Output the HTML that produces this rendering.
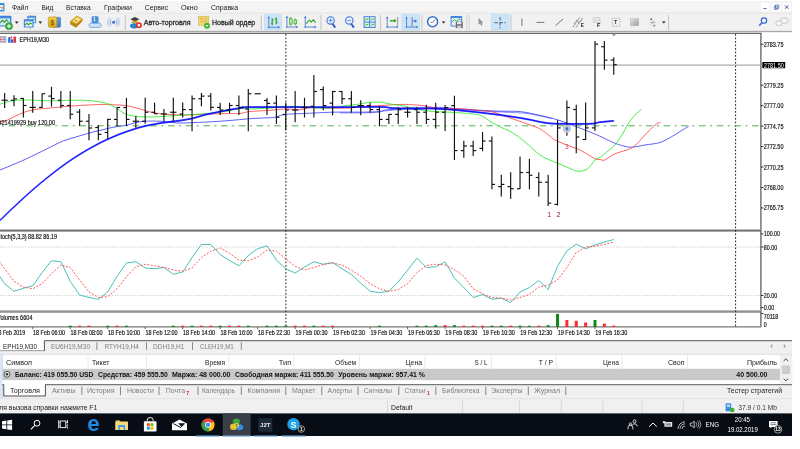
<!DOCTYPE html>
<html lang="ru"><head><meta charset="utf-8"><title>MetaTrader 5 - EPH19,M30</title>
<style>
html,body{margin:0;padding:0;background:#fff;overflow:hidden}
body{width:800px;height:449px;position:relative}
svg{position:absolute;left:0;top:0;display:block;font-family:"Liberation Sans", sans-serif;will-change:transform;filter:blur(0.35px);}
text{white-space:pre}
</style></head><body>
<svg width="800" height="449" viewBox="0 0 800 449">
<rect x="0.00" y="1.30" width="792.00" height="435.00" fill="#f0f0f0" />
<rect x="0.00" y="1.30" width="792.00" height="12.00" fill="#f4f4f4" />
<line x1="0.00" y1="13.30" x2="792.00" y2="13.30" stroke="#dadada" stroke-width="0.7" />
<rect x="-2.00" y="3.00" width="6.50" height="8.50" fill="#3b8ede" rx="1"/>
<rect x="-2.00" y="5.20" width="5.20" height="4.60" fill="#ffffff" />
<polyline points="-1.00,8.00 1.00,7.00 2.00,8.60 3.20,6.80" fill="none" stroke="#e05a2a" stroke-width="0.8" stroke-linejoin="round" />
<text x="12.00" y="9.93" font-size="7.3" fill="#1a1a1a" font-weight="normal" textLength="16.50" lengthAdjust="spacingAndGlyphs" >Файл</text>
<text x="41.50" y="9.93" font-size="7.3" fill="#1a1a1a" font-weight="normal" textLength="11.80" lengthAdjust="spacingAndGlyphs" >Вид</text>
<text x="66.00" y="9.93" font-size="7.3" fill="#1a1a1a" font-weight="normal" textLength="24.60" lengthAdjust="spacingAndGlyphs" >Вставка</text>
<text x="104.00" y="9.93" font-size="7.3" fill="#1a1a1a" font-weight="normal" textLength="27.90" lengthAdjust="spacingAndGlyphs" >Графики</text>
<text x="144.75" y="9.93" font-size="7.3" fill="#1a1a1a" font-weight="normal" textLength="23.35" lengthAdjust="spacingAndGlyphs" >Сервис</text>
<text x="181.00" y="9.93" font-size="7.3" fill="#1a1a1a" font-weight="normal" textLength="16.75" lengthAdjust="spacingAndGlyphs" >Окно</text>
<text x="211.00" y="9.93" font-size="7.3" fill="#1a1a1a" font-weight="normal" textLength="27.10" lengthAdjust="spacingAndGlyphs" >Справка</text>
<rect x="761.00" y="3.00" width="8.40" height="8.00" fill="#ffffff" />
<rect x="771.70" y="3.00" width="8.40" height="8.00" fill="#ffffff" />
<rect x="782.40" y="3.00" width="8.40" height="8.00" fill="#ffffff" />
<line x1="763.30" y1="8.60" x2="766.60" y2="8.60" stroke="#3c5a9c" stroke-width="0.9" />
<rect x="774.30" y="6.30" width="3.20" height="3.20" fill="none" stroke="#4c68a8" stroke-width="0.7"/>
<rect x="775.60" y="5.00" width="3.20" height="3.20" fill="none" stroke="#4c68a8" stroke-width="0.7"/>
<line x1="785.00" y1="5.40" x2="788.40" y2="8.80" stroke="#3c5a9c" stroke-width="1.0" />
<line x1="788.40" y1="5.40" x2="785.00" y2="8.80" stroke="#3c5a9c" stroke-width="1.0" />
<rect x="0.00" y="13.60" width="792.00" height="17.60" fill="#f1f1f1" />
<line x1="0.00" y1="31.40" x2="792.00" y2="31.40" stroke="#8e8e8e" stroke-width="0.95" />
<rect x="0.00" y="31.85" width="792.00" height="1.00" fill="#ececec" />
<line x1="30.20" y1="15.00" x2="30.20" y2="30.00" stroke="#b9b9b9" stroke-width="0.8" />
<line x1="125.30" y1="15.00" x2="125.30" y2="30.00" stroke="#b9b9b9" stroke-width="0.8" />
<line x1="261.30" y1="15.00" x2="261.30" y2="30.00" stroke="#b9b9b9" stroke-width="0.8" />
<line x1="321.00" y1="15.00" x2="321.00" y2="30.00" stroke="#b9b9b9" stroke-width="0.8" />
<line x1="380.60" y1="15.00" x2="380.60" y2="30.00" stroke="#b9b9b9" stroke-width="0.8" />
<line x1="421.90" y1="15.00" x2="421.90" y2="30.00" stroke="#b9b9b9" stroke-width="0.8" />
<line x1="511.00" y1="15.00" x2="511.00" y2="30.00" stroke="#b9b9b9" stroke-width="0.8" />
<line x1="668.50" y1="15.00" x2="668.50" y2="30.00" stroke="#b9b9b9" stroke-width="0.8" />
<line x1="467.00" y1="15.00" x2="467.00" y2="30.00" stroke="#c4c4c4" stroke-width="0.7" />
<line x1="469.40" y1="15.50" x2="469.40" y2="30.00" stroke="#a0a0a0" stroke-width="0.8" stroke-dasharray="0.8 1.2"/>
<rect x="264.40" y="14.30" width="17.10" height="15.60" fill="#cce4f7" stroke="#b5d7f3" stroke-width="0.5"/>
<rect x="401.90" y="14.30" width="17.80" height="15.60" fill="#cce4f7" stroke="#b5d7f3" stroke-width="0.5"/>
<rect x="491.30" y="14.30" width="17.70" height="15.60" fill="#cce4f7" stroke="#b5d7f3" stroke-width="0.5"/>
<rect x="-1.00" y="15.80" width="12.40" height="10.80" fill="#3f86dc" rx="1"/>
<rect x="-0.50" y="18.40" width="10.40" height="7.00" fill="#dcebfa" />
<polyline points="0.30,22.80 2.40,20.20 4.40,22.40 6.40,19.80 8.40,21.60" fill="none" stroke="#2f9e2f" stroke-width="1.2" stroke-linejoin="round" />
<circle cx="9" cy="26.2" r="3.6" fill="#38ad38" stroke="#2a8a2a" stroke-width="0.4"/>
<line x1="7.00" y1="26.20" x2="11.00" y2="26.20" stroke="#fff" stroke-width="1.1" />
<line x1="9.00" y1="24.20" x2="9.00" y2="28.20" stroke="#fff" stroke-width="1.1" />
<path d="M14.80 21.60 h3.8 l-1.9 2.1 z" fill="#222"/>
<rect x="27.30" y="15.80" width="8.80" height="7.40" fill="#4a90df" rx="0.6"/>
<rect x="28.50" y="17.80" width="6.40" height="4.60" fill="#e4effb" />
<polyline points="28.80,21.00 30.40,19.40 32.00,21.00 33.60,18.80 34.60,19.80" fill="none" stroke="#2f9e2f" stroke-width="1" stroke-linejoin="round" />
<rect x="23.80" y="19.30" width="9.80" height="8.30" fill="#3f86dc" rx="0.6"/>
<rect x="25.00" y="21.40" width="7.40" height="5.20" fill="#eef6fd" />
<polyline points="25.30,25.00 27.00,23.20 28.60,25.00 30.30,22.80 32.00,24.20" fill="none" stroke="#2f9e2f" stroke-width="1.1" stroke-linejoin="round" />
<path d="M38.40 21.60 h3.8 l-1.9 2.1 z" fill="#222"/>
<defs><linearGradient id="gbl" x1="0" y1="0" x2="1" y2="1"><stop offset="0" stop-color="#7db4ee"/><stop offset="1" stop-color="#2f74cc"/></linearGradient><linearGradient id="ggo" x1="0" y1="0" x2="0" y2="1"><stop offset="0" stop-color="#f4d04a"/><stop offset="1" stop-color="#d9a514"/></linearGradient></defs>
<rect x="52.00" y="17.30" width="8.60" height="10.00" fill="url(#gbl)" rx="1.2" stroke="#2f6fc0" stroke-width="0.5"/>
<rect x="48.30" y="16.90" width="8.50" height="10.40" fill="url(#ggo)" rx="1.2" stroke="#b08408" stroke-width="0.5"/>
<text x="50.40" y="24.98" font-size="6.6" fill="#7a5a00" font-weight="bold"  >$</text>
<path d="M70.2 21.6 l6.6 -5.6 l5.8 3 l-0.4 2.6 l-6.2 6.2 l-5.8 -3.6 z" fill="#b88a14"/>
<path d="M70.2 21.6 l6.6 -5.6 l5.8 3 l-6.4 5.8 z" fill="url(#ggo)" stroke="#9a7410" stroke-width="0.4"/>
<path d="M73 21.2 l4 -3.2 l3.2 1.6 l-3.8 3.4 z" fill="#f9eaa4"/>
<path d="M74.6 21 q1.6 -1.8 3.2 -0.4 q-1.8 0 -1.4 1.2z" fill="#a67c10"/>
<path d="M91 27.4 h8.2 a2.1 2.1 0 0 0 0 -4.2 h-8.2 a2.1 2.1 0 0 0 0 4.2z" fill="#cfe3f8" stroke="#5a96d8" stroke-width="0.7"/>
<rect x="91.60" y="16.20" width="6.90" height="7.00" fill="#4a90d9" rx="1.2"/>
<text x="93.20" y="21.26" font-size="4.6" fill="#fff" font-weight="bold"  >1</text>
<circle cx="113.6" cy="22.3" r="1.5" fill="#3b6fd6"/>
<path d="M111.62 19.80 a3.2 3.2 0 0 0 0 4.99" fill="none" stroke="#5b86dc" stroke-width="0.8" opacity="0.8"/>
<path d="M115.58 19.80 a3.2 3.2 0 0 1 0 4.99" fill="none" stroke="#5b86dc" stroke-width="0.8" opacity="0.8"/>
<path d="M110.56 18.48 a4.9 4.9 0 0 0 0 7.64" fill="none" stroke="#5b86dc" stroke-width="0.8" opacity="0.55"/>
<path d="M116.64 18.48 a4.9 4.9 0 0 1 0 7.64" fill="none" stroke="#5b86dc" stroke-width="0.8" opacity="0.55"/>
<path d="M109.63 17.31 a6.4 6.4 0 0 0 0 9.98" fill="none" stroke="#5b86dc" stroke-width="0.8" opacity="0.35"/>
<path d="M117.57 17.31 a6.4 6.4 0 0 1 0 9.98" fill="none" stroke="#5b86dc" stroke-width="0.8" opacity="0.35"/>
<path d="M130.3 19.3 l4.6 -2.3 l4.6 2.3 l-4.6 2.1 z" fill="#3c3c3c"/>
<rect x="132.30" y="20.60" width="5.20" height="2.60" fill="#c9a020" />
<ellipse cx="134.3" cy="25.8" rx="4.3" ry="2.6" fill="#2f7fd6"/>
<circle cx="138.9" cy="25.2" r="3" fill="#e0301e"/>
<rect x="137.70" y="24.00" width="2.40" height="2.40" fill="#fff" />
<text x="143.75" y="25.03" font-size="7.3" fill="#2a2a2a" font-weight="normal" textLength="46.85" lengthAdjust="spacingAndGlyphs" stroke="#2a2a2a" stroke-width="0.28">Авто-торговля</text>
<rect x="198.60" y="16.20" width="10.20" height="9.00" fill="#f3d873" stroke="#c9a63a" stroke-width="0.5"/>
<line x1="200.00" y1="18.30" x2="207.40" y2="18.30" stroke="#c7a748" stroke-width="0.5" />
<line x1="200.00" y1="20.00" x2="207.40" y2="20.00" stroke="#c7a748" stroke-width="0.5" />
<line x1="200.00" y1="21.70" x2="207.40" y2="21.70" stroke="#c7a748" stroke-width="0.5" />
<circle cx="207" cy="25.7" r="3" fill="#43b12f"/>
<path d="M205.4 25 h3.2 l-1.6 2 z" fill="#fff"/>
<text x="211.90" y="25.03" font-size="7.3" fill="#2a2a2a" font-weight="normal" textLength="43.40" lengthAdjust="spacingAndGlyphs" stroke="#2a2a2a" stroke-width="0.28">Новый ордер</text>
<line x1="268.80" y1="28.30" x2="268.80" y2="16.80" stroke="#3b6fd6" stroke-width="0.8" />
<line x1="267.80" y1="27.30" x2="279.30" y2="27.30" stroke="#3b6fd6" stroke-width="0.8" />
<path d="M267.60 18.20 l1.2 -1.9 l1.2 1.9z M278.10 26.10 l1.9 1.2 l-1.9 1.2z" fill="#3b6fd6"/>
<line x1="272.20" y1="18.20" x2="272.20" y2="25.30" stroke="#36a52c" stroke-width="1.3" />
<line x1="276.30" y1="17.60" x2="276.30" y2="24.20" stroke="#36a52c" stroke-width="1.3" />
<line x1="271.00" y1="23.20" x2="272.20" y2="23.20" stroke="#36a52c" stroke-width="1" />
<line x1="272.20" y1="19.80" x2="273.60" y2="19.80" stroke="#36a52c" stroke-width="1" />
<line x1="275.00" y1="19.00" x2="276.30" y2="19.00" stroke="#36a52c" stroke-width="1" />
<line x1="276.30" y1="22.60" x2="277.70" y2="22.60" stroke="#36a52c" stroke-width="1" />
<line x1="286.90" y1="28.00" x2="286.90" y2="16.50" stroke="#3b6fd6" stroke-width="0.8" />
<line x1="285.90" y1="27.00" x2="297.40" y2="27.00" stroke="#3b6fd6" stroke-width="0.8" />
<path d="M285.70 17.90 l1.2 -1.9 l1.2 1.9z M296.20 25.80 l1.9 1.2 l-1.9 1.2z" fill="#3b6fd6"/>
<line x1="290.70" y1="17.00" x2="290.70" y2="25.80" stroke="#36a52c" stroke-width="0.8" />
<rect x="289.40" y="18.70" width="2.70" height="5.40" fill="#bfe8b4" stroke="#36a52c" stroke-width="0.7"/>
<line x1="295.30" y1="18.50" x2="295.30" y2="25.30" stroke="#36a52c" stroke-width="0.8" />
<rect x="294.00" y="20.00" width="2.70" height="3.80" fill="#bfe8b4" stroke="#36a52c" stroke-width="0.7"/>
<line x1="305.30" y1="28.00" x2="305.30" y2="16.50" stroke="#3b6fd6" stroke-width="0.8" />
<line x1="304.30" y1="27.00" x2="315.80" y2="27.00" stroke="#3b6fd6" stroke-width="0.8" />
<path d="M304.10 17.90 l1.2 -1.9 l1.2 1.9z M314.60 25.80 l1.9 1.2 l-1.9 1.2z" fill="#3b6fd6"/>
<polyline points="306.30,23.70 309.30,20.00 311.30,22.20 313.40,19.60 315.60,22.60" fill="none" stroke="#36a52c" stroke-width="1.1" stroke-linejoin="round" />
<line x1="332.20" y1="23.20" x2="335.20" y2="27.60" stroke="#2d5fc4" stroke-width="1.9" />
<circle cx="330.6" cy="20.4" r="3.7" fill="#e8f1fc" stroke="#3b73d9" stroke-width="1.1"/>
<line x1="328.70" y1="20.40" x2="332.50" y2="20.40" stroke="#3b73d9" stroke-width="0.8" />
<line x1="330.60" y1="18.50" x2="330.60" y2="22.30" stroke="#3b73d9" stroke-width="0.8" />
<line x1="350.90" y1="23.20" x2="353.90" y2="27.60" stroke="#2d5fc4" stroke-width="1.9" />
<circle cx="349.3" cy="20.4" r="3.7" fill="#e8f1fc" stroke="#3b73d9" stroke-width="1.1"/>
<line x1="347.40" y1="20.40" x2="351.20" y2="20.40" stroke="#3b73d9" stroke-width="0.8" />
<rect x="363.60" y="16.20" width="12.00" height="11.80" fill="#3f86dc" />
<rect x="364.60" y="17.20" width="4.50" height="4.40" fill="#dff0e0" />
<line x1="365.40" y1="19.80" x2="368.30" y2="18.80" stroke="#36a52c" stroke-width="0.9" />
<rect x="364.60" y="22.60" width="4.50" height="4.40" fill="#dff0e0" />
<line x1="365.40" y1="25.20" x2="368.30" y2="24.20" stroke="#36a52c" stroke-width="0.9" />
<rect x="370.10" y="17.20" width="4.50" height="4.40" fill="#dff0e0" />
<line x1="370.90" y1="19.80" x2="373.80" y2="18.80" stroke="#36a52c" stroke-width="0.9" />
<rect x="370.10" y="22.60" width="4.50" height="4.40" fill="#dff0e0" />
<line x1="370.90" y1="25.20" x2="373.80" y2="24.20" stroke="#36a52c" stroke-width="0.9" />
<line x1="387.20" y1="28.00" x2="387.20" y2="17.00" stroke="#3b6fd6" stroke-width="0.8" />
<line x1="386.20" y1="27.00" x2="397.70" y2="27.00" stroke="#3b6fd6" stroke-width="0.8" />
<path d="M386.00 18.40 l1.2 -1.9 l1.2 1.9z M396.50 25.80 l1.9 1.2 l-1.9 1.2z" fill="#3b6fd6"/>
<line x1="390.00" y1="20.80" x2="395.00" y2="20.80" stroke="#36a52c" stroke-width="1.5" />
<path d="M394 18.8 l2.6 2 l-2.6 2z" fill="#36a52c"/>
<line x1="397.70" y1="17.00" x2="397.70" y2="25.60" stroke="#8a8a8a" stroke-width="0.9" />
<line x1="406.50" y1="28.00" x2="406.50" y2="17.00" stroke="#3b6fd6" stroke-width="0.8" />
<line x1="405.50" y1="27.00" x2="417.50" y2="27.00" stroke="#3b6fd6" stroke-width="0.8" />
<path d="M405.30 18.40 l1.2 -1.9 l1.2 1.9z M416.30 25.80 l1.9 1.2 l-1.9 1.2z" fill="#3b6fd6"/>
<line x1="412.20" y1="17.00" x2="412.20" y2="26.60" stroke="#7d8ea8" stroke-width="1.2" />
<line x1="413.00" y1="21.00" x2="415.30" y2="21.00" stroke="#3b6fd6" stroke-width="1" />
<path d="M414.8 19.3 l2.4 1.7 l-2.4 1.7z" fill="#3b6fd6"/>
<circle cx="432.6" cy="21.8" r="5" fill="#fff" stroke="#2f6fd0" stroke-width="1.5"/>
<line x1="432.60" y1="22.20" x2="435.30" y2="19.60" stroke="#555" stroke-width="0.8" />
<line x1="432.60" y1="22.20" x2="430.60" y2="22.60" stroke="#555" stroke-width="0.8" />
<path d="M441.70 21.40 h3.8 l-1.9 2.1 z" fill="#222"/>
<rect x="450.60" y="16.00" width="11.60" height="10.50" fill="#3f86dc" rx="0.6"/>
<rect x="451.60" y="18.00" width="9.60" height="7.60" fill="#e4f0fb" />
<polyline points="452.00,22.00 454.50,19.60 456.60,21.40 459.00,18.80 461.00,20.00" fill="none" stroke="#36a52c" stroke-width="0.9" stroke-linejoin="round" />
<rect x="455.80" y="21.60" width="7.00" height="6.50" fill="#6e6e6e" />
<rect x="457.00" y="22.00" width="4.40" height="2.20" fill="#e6e6e6" />
<rect x="457.20" y="25.60" width="4.00" height="2.50" fill="#cfcfcf" />
<path d="M478.8 18.6 v5.6 l1.4 -1.2 l1.1 2.4 l0.9 -0.4 l-1.1 -2.3 h1.9 z" fill="#9a9a9a" stroke="#666" stroke-width="0.35"/>
<line x1="500.10" y1="17.00" x2="500.10" y2="28.30" stroke="#4a5560" stroke-width="0.9" stroke-dasharray="3.6 1.4"/>
<line x1="494.40" y1="22.70" x2="505.80" y2="22.70" stroke="#4a5560" stroke-width="0.9" stroke-dasharray="3.6 1.4"/>
<line x1="521.90" y1="18.60" x2="521.90" y2="26.00" stroke="#666" stroke-width="0.9" />
<line x1="536.60" y1="22.40" x2="544.40" y2="22.40" stroke="#666" stroke-width="0.9" />
<line x1="555.60" y1="25.50" x2="563.00" y2="19.00" stroke="#666" stroke-width="0.9" />
<line x1="573.00" y1="27.00" x2="579.50" y2="17.50" stroke="#555" stroke-width="0.8" stroke-dasharray="1.4 0.7"/>
<line x1="576.00" y1="27.50" x2="582.50" y2="18.00" stroke="#555" stroke-width="0.8" stroke-dasharray="1.4 0.7"/>
<polyline points="574.00,24.00 577.00,20.00 579.00,23.00 582.00,19.00" fill="none" stroke="#777" stroke-width="0.6" stroke-linejoin="round" />
<text x="580.80" y="27.46" font-size="4.6" fill="#222" font-weight="bold"  >E</text>
<line x1="592.60" y1="17.60" x2="601.00" y2="17.60" stroke="#9a9a9a" stroke-width="0.5" stroke-dasharray="1 0.6"/>
<line x1="592.60" y1="19.20" x2="601.00" y2="19.20" stroke="#9a9a9a" stroke-width="0.5" stroke-dasharray="1 0.6"/>
<line x1="592.60" y1="20.80" x2="601.00" y2="20.80" stroke="#9a9a9a" stroke-width="0.5" stroke-dasharray="1 0.6"/>
<line x1="592.60" y1="22.40" x2="601.00" y2="22.40" stroke="#9a9a9a" stroke-width="0.5" stroke-dasharray="1 0.6"/>
<text x="597.00" y="27.42" font-size="5.6" fill="#222" font-weight="bold"  >F</text>
<rect x="612.30" y="18.20" width="7.60" height="8.00" fill="none" stroke="#777" stroke-width="0.5" stroke-dasharray="1 0.7"/>
<text x="614.10" y="24.24" font-size="5.4" fill="#333" font-weight="bold"  >T</text>
<defs><linearGradient id="gsq" x1="0" y1="0" x2="1" y2="1"><stop offset="0" stop-color="#e6e6e6"/><stop offset="1" stop-color="#9c9c9c"/></linearGradient></defs>
<rect x="630.30" y="18.60" width="8.40" height="7.20" fill="url(#gsq)" stroke="#b0b0b0" stroke-width="0.4"/>
<path d="M649.6 19.4 l2.2 -1.6 l0.4 2.6z M655.8 25.6 l-2.2 1.4 l-0.2 -2.6z" fill="#777"/>
<line x1="650.40" y1="22.60" x2="655.40" y2="22.60" stroke="#888" stroke-width="0.7" />
<line x1="651.00" y1="24.60" x2="654.00" y2="20.30" stroke="#999" stroke-width="0.6" />
<path d="M661.90 21.40 h3.8 l-1.9 2.1 z" fill="#222"/>
<circle cx="764" cy="20.6" r="2.7" fill="#eef3fc" stroke="#3866cf" stroke-width="1.2"/>
<line x1="762.00" y1="22.80" x2="759.20" y2="25.60" stroke="#3866cf" stroke-width="1.5" />
<ellipse cx="784.3" cy="20.6" rx="3.9" ry="2.9" fill="#f3f3f3" stroke="#a9a9a9" stroke-width="0.6"/>
<ellipse cx="779" cy="23.2" rx="3.2" ry="2.4" fill="#f8f8f8" stroke="#a9a9a9" stroke-width="0.6"/>
<rect x="0.00" y="32.80" width="792.00" height="305.20" fill="#ffffff" />
<line x1="0.00" y1="33.35" x2="761.50" y2="33.35" stroke="#6a6a6a" stroke-width="1.15" />
<line x1="760.90" y1="33.30" x2="760.90" y2="327.00" stroke="#555" stroke-width="1.2" />
<line x1="0.00" y1="229.80" x2="760.90" y2="229.80" stroke="#a4a4a4" stroke-width="1.2" />
<line x1="0.00" y1="230.90" x2="760.90" y2="230.90" stroke="#555" stroke-width="1.2" />
<line x1="0.00" y1="310.90" x2="760.90" y2="310.90" stroke="#a4a4a4" stroke-width="1.2" />
<line x1="0.00" y1="312.00" x2="760.90" y2="312.00" stroke="#555" stroke-width="1.2" />
<line x1="0.00" y1="326.90" x2="760.90" y2="326.90" stroke="#777" stroke-width="1.4" />
<line x1="285.90" y1="34.00" x2="285.90" y2="327.00" stroke="#222" stroke-width="1.0" stroke-dasharray="1.75 1.75"/>
<line x1="735.60" y1="34.00" x2="735.60" y2="327.00" stroke="#222" stroke-width="1.0" stroke-dasharray="1.75 1.75"/>
<line x1="0.00" y1="65.10" x2="760.90" y2="65.10" stroke="#8c8c8c" stroke-width="0.9" />
<line x1="0.00" y1="125.80" x2="760.90" y2="125.80" stroke="#4caf50" stroke-width="1.0" stroke-dasharray="6.5 4.6 2 4.6" stroke-dashoffset="9"/>
<line x1="0.00" y1="247.00" x2="760.90" y2="247.00" stroke="#b8b8b8" stroke-width="0.7" stroke-dasharray="1.3 1.5"/>
<line x1="0.00" y1="295.50" x2="760.90" y2="295.50" stroke="#b8b8b8" stroke-width="0.7" stroke-dasharray="1.3 1.5"/>
<path d="M340.0 112.9C345.5 112.9 365.3 112.9 373.0 112.6C380.7 112.2 381.5 111.3 386.0 110.8C390.5 110.3 394.3 110.0 400.0 109.6C405.7 109.2 410.8 108.5 420.0 108.4C429.2 108.4 445.0 108.9 455.0 109.3C465.0 109.7 471.7 110.3 480.0 110.8C488.3 111.3 497.5 111.8 505.0 112.2C512.5 112.6 519.2 112.6 525.0 113.2C530.8 113.8 535.5 115.1 540.0 116.0C544.5 116.9 550.0 118.2 552.0 118.6" fill="none" stroke="#5a5aff" stroke-width="0.7" />
<path d="M0.0 170.0C4.2 168.2 16.7 163.3 25.0 159.5C33.3 155.7 43.8 150.3 50.0 147.3C56.2 144.3 58.3 142.9 62.5 141.2C66.7 139.6 70.8 138.6 75.0 137.3C79.2 136.0 82.9 134.8 87.5 133.5C92.1 132.2 97.9 130.8 102.5 129.8C107.1 128.7 111.1 127.6 115.0 126.9C118.9 126.2 122.7 126.1 126.0 125.4C129.3 124.7 131.8 123.4 135.0 122.8C138.2 122.1 140.8 121.5 145.0 121.2C149.2 121.0 155.8 121.1 160.0 121.2C164.2 121.4 166.7 122.0 170.0 122.2C173.3 122.5 174.2 123.0 180.0 123.0C185.8 123.0 196.7 122.5 205.0 122.1C213.3 121.7 222.7 121.1 230.0 120.5C237.3 119.9 242.5 119.2 248.8 118.8C255.0 118.3 263.1 118.0 267.5 117.8C271.9 117.5 271.9 117.8 275.0 117.2C278.1 116.6 279.8 115.1 286.0 114.4C292.2 113.7 304.8 113.5 312.5 113.1C320.2 112.7 322.3 112.5 332.5 112.2C342.7 112.0 364.8 112.3 373.8 111.9C382.7 111.5 381.8 110.5 386.0 110.0C390.2 109.5 394.6 109.2 398.8 108.8C402.9 108.3 403.7 107.7 411.0 107.5C418.3 107.3 435.2 107.3 442.5 107.5C449.8 107.7 449.6 108.2 455.0 108.6C460.4 109.0 467.5 109.6 475.0 110.0C482.5 110.4 492.5 111.0 500.0 111.2C507.5 111.5 513.3 110.9 520.0 111.6C526.7 112.3 533.8 114.0 540.0 115.4C546.2 116.8 551.5 117.9 557.5 119.8C563.5 121.6 569.8 124.2 576.0 126.6C582.2 129.0 588.9 131.4 595.0 134.0C601.1 136.6 607.5 140.1 612.5 142.2C617.5 144.3 621.7 145.6 625.0 146.4C628.3 147.2 629.2 147.3 632.5 147.1C635.8 146.9 640.4 145.8 645.0 145.0C649.6 144.2 655.4 144.0 660.0 142.5C664.6 141.0 668.8 138.3 672.5 136.2C676.2 134.2 679.8 131.7 682.5 130.0C685.2 128.3 687.7 126.9 688.7 126.3" fill="none" stroke="#2a2aff" stroke-width="0.75" />
<path d="M0.0 122.5C1.2 122.1 5.0 121.0 7.5 120.0C10.0 119.0 12.1 117.6 15.0 116.2C17.9 114.9 21.7 113.1 25.0 112.0C28.3 110.9 30.8 110.2 35.0 109.5C39.2 108.8 43.3 108.6 50.0 108.0C56.7 107.4 66.7 106.3 75.0 105.8C83.3 105.2 93.8 104.7 100.0 104.5C106.2 104.3 108.3 104.6 112.5 104.8C116.7 104.9 121.2 105.0 125.0 105.5C128.8 106.0 131.7 106.7 135.0 107.5C138.3 108.3 141.7 109.6 145.0 110.5C148.3 111.4 150.8 112.3 155.0 113.0C159.2 113.7 165.0 114.2 170.0 114.5C175.0 114.8 179.2 115.0 185.0 115.0C190.8 115.0 197.5 114.5 205.0 114.2C212.5 114.0 224.2 113.6 230.0 113.5C235.8 113.4 236.7 113.8 240.0 113.5C243.3 113.2 245.4 112.0 250.0 111.5C254.6 111.0 261.5 110.9 267.5 110.5C273.5 110.1 280.8 109.1 286.0 109.0C291.2 108.9 294.6 110.0 299.0 109.8C303.4 109.5 306.9 107.8 312.5 107.5C318.1 107.2 326.2 108.0 332.5 108.1C338.8 108.2 345.4 108.2 350.0 107.9C354.6 107.6 357.1 106.5 360.0 106.2C362.9 106.0 364.2 106.4 367.5 106.2C370.8 106.1 374.6 105.9 380.0 105.6C385.4 105.3 394.6 104.5 400.0 104.4C405.4 104.3 408.3 104.5 412.5 104.8C416.7 105.0 421.7 105.3 425.0 105.8C428.3 106.2 429.6 107.0 432.5 107.5C435.4 108.0 438.8 108.8 442.5 109.0C446.2 109.2 449.6 108.3 455.0 108.5C460.4 108.7 468.8 109.4 475.0 110.0C481.2 110.6 487.5 111.0 492.5 112.0C497.5 113.0 500.8 114.8 505.0 116.2C509.2 117.7 513.3 119.0 517.5 120.5C521.7 122.0 526.2 123.6 530.0 125.0C533.8 126.4 536.7 126.9 540.0 128.8C543.3 130.6 547.5 134.4 550.0 136.2C552.5 138.1 551.7 138.3 555.0 140.0C558.3 141.7 565.8 144.6 570.0 146.2C574.2 147.9 575.8 147.9 580.0 150.0C584.2 152.1 591.7 157.2 595.0 158.8C598.3 160.3 598.3 159.3 600.0 159.5C601.7 159.7 602.5 161.0 605.0 160.0C607.5 159.0 610.4 155.8 615.0 153.8C619.6 151.7 627.5 150.6 632.5 147.5C637.5 144.4 641.2 138.8 645.0 135.0C648.8 131.2 652.4 127.1 655.0 125.0C657.6 122.9 659.6 122.7 660.5 122.2" fill="none" stroke="#ff3030" stroke-width="0.75" />
<path d="M0.0 104.2C1.7 103.8 5.8 102.0 10.0 101.2C14.2 100.5 18.3 100.1 25.0 100.0C31.7 99.9 41.7 100.7 50.0 100.8C58.3 100.8 68.8 100.3 75.0 100.2C81.2 100.2 83.3 100.2 87.5 100.5C91.7 100.8 96.2 101.1 100.0 101.8C103.8 102.4 107.1 103.3 110.0 104.5C112.9 105.7 115.0 107.2 117.5 108.8C120.0 110.3 122.1 112.5 125.0 113.8C127.9 115.0 130.8 115.7 135.0 116.2C139.2 116.8 144.2 117.0 150.0 117.0C155.8 117.0 164.2 116.3 170.0 116.0C175.8 115.7 180.2 115.3 185.0 115.0C189.8 114.7 193.6 114.7 199.0 114.2C204.4 113.8 212.3 113.1 217.5 112.5C222.7 111.9 226.2 111.3 230.0 110.6C233.8 109.9 237.1 108.7 240.0 108.4C242.9 108.1 245.0 108.9 247.5 109.0C250.0 109.1 251.2 108.9 255.0 108.8C258.8 108.6 264.8 108.5 270.0 108.1C275.2 107.7 280.8 106.7 286.0 106.5C291.2 106.3 295.3 106.6 301.0 106.9C306.7 107.2 313.9 108.0 320.0 108.1C326.1 108.2 333.3 107.9 337.5 107.5C341.7 107.1 341.7 106.1 345.0 105.6C348.3 105.1 353.8 104.9 357.5 104.4C361.2 103.9 363.8 102.9 367.5 102.5C371.2 102.1 375.8 101.9 380.0 102.2C384.2 102.6 388.3 103.7 392.5 104.4C396.7 105.1 401.2 105.5 405.0 106.2C408.8 107.0 410.8 107.9 415.0 108.8C419.2 109.6 423.3 110.6 430.0 111.2C436.7 111.9 447.5 112.0 455.0 112.5C462.5 113.0 470.4 113.6 475.0 114.2C479.6 114.9 480.0 115.1 482.5 116.2C485.0 117.4 487.1 119.5 490.0 121.2C492.9 123.0 496.7 125.2 500.0 126.9C503.3 128.6 507.1 129.7 510.0 131.2C512.9 132.8 515.0 134.5 517.5 136.2C520.0 138.0 521.2 138.9 525.0 142.0C528.8 145.1 535.8 152.0 540.0 155.0C544.2 158.0 545.8 158.1 550.0 160.0C554.2 161.9 560.4 164.4 565.0 166.2C569.6 168.1 573.8 170.8 577.5 171.2C581.2 171.7 584.6 170.6 587.5 168.8C590.4 166.9 592.9 161.9 595.0 160.0C597.1 158.1 597.8 158.8 600.0 157.3C602.2 155.8 605.5 153.1 608.0 151.0C610.5 148.9 612.6 147.8 615.0 145.0C617.4 142.2 620.4 137.3 622.5 134.0C624.6 130.7 625.4 128.2 627.5 125.0C629.6 121.8 632.7 117.6 635.0 115.0C637.3 112.4 640.4 110.4 641.5 109.5" fill="none" stroke="#10e810" stroke-width="0.75" />
<path d="M0.0 220.4C1.7 218.8 6.7 213.9 10.0 210.7C13.3 207.5 16.7 204.4 20.0 201.3C23.3 198.2 26.7 195.1 30.0 192.2C33.3 189.2 36.7 186.4 40.0 183.6C43.3 180.8 46.7 178.1 50.0 175.5C53.3 172.9 56.7 170.3 60.0 167.8C63.3 165.3 66.7 163.0 70.0 160.7C73.3 158.4 76.7 156.3 80.0 154.2C83.3 152.1 86.7 150.2 90.0 148.3C93.3 146.4 96.7 144.6 100.0 142.9C103.3 141.2 106.7 139.7 110.0 138.2C113.3 136.7 116.7 135.3 120.0 134.0C123.3 132.7 126.7 131.6 130.0 130.5C133.3 129.4 136.7 128.2 140.0 127.3C143.3 126.4 146.7 125.7 150.0 125.0C153.3 124.3 156.7 123.7 160.0 123.2C163.3 122.7 166.7 122.2 170.0 121.8C173.3 121.4 176.2 121.2 180.0 120.6C183.8 120.0 188.3 119.4 192.5 118.4C196.7 117.4 200.8 115.8 205.0 114.8C209.2 113.8 213.3 112.9 217.5 112.1C221.7 111.2 225.8 110.4 230.0 109.7C234.2 109.0 239.2 108.2 242.5 107.8C245.8 107.4 235.4 107.2 250.0 107.1C264.6 107.0 308.3 107.2 330.0 107.2C351.7 107.2 369.6 106.8 380.0 106.9C390.4 107.1 386.2 107.8 392.5 108.1C398.8 108.4 411.2 108.7 417.5 108.8C423.8 108.8 425.8 108.5 430.0 108.5C434.2 108.5 438.3 108.8 442.5 109.0C446.7 109.2 449.6 109.5 455.0 110.0C460.4 110.5 467.5 111.2 475.0 112.0C482.5 112.8 491.7 113.9 500.0 115.0C508.3 116.1 517.5 117.5 525.0 118.8C532.5 120.0 539.2 122.0 545.0 122.8C550.8 123.6 552.5 123.6 560.0 123.8C567.5 123.9 583.3 124.0 590.0 123.8C596.7 123.5 596.0 122.7 600.0 122.2C604.0 121.7 611.5 121.1 613.8 120.9" fill="none" stroke="#0a0aff" stroke-width="0.9" />
<path d="M0.0 220.4C1.7 218.8 6.7 213.9 10.0 210.7C13.3 207.5 16.7 204.4 20.0 201.3C23.3 198.2 26.7 195.1 30.0 192.2C33.3 189.2 36.7 186.4 40.0 183.6C43.3 180.8 46.7 178.1 50.0 175.5C53.3 172.9 56.7 170.3 60.0 167.8C63.3 165.3 66.7 163.0 70.0 160.7C73.3 158.4 76.7 156.3 80.0 154.2C83.3 152.1 86.7 150.2 90.0 148.3C93.3 146.4 96.7 144.6 100.0 142.9C103.3 141.2 106.7 139.7 110.0 138.2C113.3 136.7 116.7 135.3 120.0 134.0C123.3 132.7 126.7 131.6 130.0 130.5C133.3 129.4 136.7 128.2 140.0 127.3C143.3 126.4 146.7 125.7 150.0 125.0C153.3 124.3 156.7 123.7 160.0 123.2C163.3 122.7 166.7 122.2 170.0 121.8C173.3 121.4 176.2 121.2 180.0 120.6C183.8 120.0 188.3 119.4 192.5 118.4C196.7 117.4 200.8 115.8 205.0 114.8C209.2 113.8 213.3 112.9 217.5 112.1C221.7 111.2 225.8 110.4 230.0 109.7C234.2 109.0 239.2 108.2 242.5 107.8C245.8 107.4 235.4 107.2 250.0 107.1C264.6 107.0 308.3 107.2 330.0 107.2C351.7 107.2 369.6 106.8 380.0 106.9C390.4 107.1 386.2 107.8 392.5 108.1C398.8 108.4 411.2 108.7 417.5 108.8C423.8 108.8 425.8 108.5 430.0 108.5C434.2 108.5 438.3 108.8 442.5 109.0C446.7 109.2 449.6 109.5 455.0 110.0C460.4 110.5 467.5 111.2 475.0 112.0C482.5 112.8 491.7 113.9 500.0 115.0C508.3 116.1 517.5 117.5 525.0 118.8C532.5 120.0 539.2 122.0 545.0 122.8C550.8 123.6 552.5 123.6 560.0 123.8C567.5 123.9 583.3 124.0 590.0 123.8C596.7 123.5 596.0 122.7 600.0 122.2C604.0 121.7 611.5 121.1 613.8 120.9" fill="none" stroke="#0a0aff" stroke-width="0.45" transform="translate(-0.42 -0.42)"/>
<path d="M0.0 220.4C1.7 218.8 6.7 213.9 10.0 210.7C13.3 207.5 16.7 204.4 20.0 201.3C23.3 198.2 26.7 195.1 30.0 192.2C33.3 189.2 36.7 186.4 40.0 183.6C43.3 180.8 46.7 178.1 50.0 175.5C53.3 172.9 56.7 170.3 60.0 167.8C63.3 165.3 66.7 163.0 70.0 160.7C73.3 158.4 76.7 156.3 80.0 154.2C83.3 152.1 86.7 150.2 90.0 148.3C93.3 146.4 96.7 144.6 100.0 142.9C103.3 141.2 106.7 139.7 110.0 138.2C113.3 136.7 116.7 135.3 120.0 134.0C123.3 132.7 126.7 131.6 130.0 130.5C133.3 129.4 136.7 128.2 140.0 127.3C143.3 126.4 146.7 125.7 150.0 125.0C153.3 124.3 156.7 123.7 160.0 123.2C163.3 122.7 166.7 122.2 170.0 121.8C173.3 121.4 176.2 121.2 180.0 120.6C183.8 120.0 188.3 119.4 192.5 118.4C196.7 117.4 200.8 115.8 205.0 114.8C209.2 113.8 213.3 112.9 217.5 112.1C221.7 111.2 225.8 110.4 230.0 109.7C234.2 109.0 239.2 108.2 242.5 107.8C245.8 107.4 235.4 107.2 250.0 107.1C264.6 107.0 308.3 107.2 330.0 107.2C351.7 107.2 369.6 106.8 380.0 106.9C390.4 107.1 386.2 107.8 392.5 108.1C398.8 108.4 411.2 108.7 417.5 108.8C423.8 108.8 425.8 108.5 430.0 108.5C434.2 108.5 438.3 108.8 442.5 109.0C446.7 109.2 449.6 109.5 455.0 110.0C460.4 110.5 467.5 111.2 475.0 112.0C482.5 112.8 491.7 113.9 500.0 115.0C508.3 116.1 517.5 117.5 525.0 118.8C532.5 120.0 539.2 122.0 545.0 122.8C550.8 123.6 552.5 123.6 560.0 123.8C567.5 123.9 583.3 124.0 590.0 123.8C596.7 123.5 596.0 122.7 600.0 122.2C604.0 121.7 611.5 121.1 613.8 120.9" fill="none" stroke="#0a0aff" stroke-width="0.45" transform="translate(0.42 -0.42)"/>
<path d="M0.0 220.4C1.7 218.8 6.7 213.9 10.0 210.7C13.3 207.5 16.7 204.4 20.0 201.3C23.3 198.2 26.7 195.1 30.0 192.2C33.3 189.2 36.7 186.4 40.0 183.6C43.3 180.8 46.7 178.1 50.0 175.5C53.3 172.9 56.7 170.3 60.0 167.8C63.3 165.3 66.7 163.0 70.0 160.7C73.3 158.4 76.7 156.3 80.0 154.2C83.3 152.1 86.7 150.2 90.0 148.3C93.3 146.4 96.7 144.6 100.0 142.9C103.3 141.2 106.7 139.7 110.0 138.2C113.3 136.7 116.7 135.3 120.0 134.0C123.3 132.7 126.7 131.6 130.0 130.5C133.3 129.4 136.7 128.2 140.0 127.3C143.3 126.4 146.7 125.7 150.0 125.0C153.3 124.3 156.7 123.7 160.0 123.2C163.3 122.7 166.7 122.2 170.0 121.8C173.3 121.4 176.2 121.2 180.0 120.6C183.8 120.0 188.3 119.4 192.5 118.4C196.7 117.4 200.8 115.8 205.0 114.8C209.2 113.8 213.3 112.9 217.5 112.1C221.7 111.2 225.8 110.4 230.0 109.7C234.2 109.0 239.2 108.2 242.5 107.8C245.8 107.4 235.4 107.2 250.0 107.1C264.6 107.0 308.3 107.2 330.0 107.2C351.7 107.2 369.6 106.8 380.0 106.9C390.4 107.1 386.2 107.8 392.5 108.1C398.8 108.4 411.2 108.7 417.5 108.8C423.8 108.8 425.8 108.5 430.0 108.5C434.2 108.5 438.3 108.8 442.5 109.0C446.7 109.2 449.6 109.5 455.0 110.0C460.4 110.5 467.5 111.2 475.0 112.0C482.5 112.8 491.7 113.9 500.0 115.0C508.3 116.1 517.5 117.5 525.0 118.8C532.5 120.0 539.2 122.0 545.0 122.8C550.8 123.6 552.5 123.6 560.0 123.8C567.5 123.9 583.3 124.0 590.0 123.8C596.7 123.5 596.0 122.7 600.0 122.2C604.0 121.7 611.5 121.1 613.8 120.9" fill="none" stroke="#0a0aff" stroke-width="0.45" transform="translate(-0.42 0.42)"/>
<path d="M0.0 220.4C1.7 218.8 6.7 213.9 10.0 210.7C13.3 207.5 16.7 204.4 20.0 201.3C23.3 198.2 26.7 195.1 30.0 192.2C33.3 189.2 36.7 186.4 40.0 183.6C43.3 180.8 46.7 178.1 50.0 175.5C53.3 172.9 56.7 170.3 60.0 167.8C63.3 165.3 66.7 163.0 70.0 160.7C73.3 158.4 76.7 156.3 80.0 154.2C83.3 152.1 86.7 150.2 90.0 148.3C93.3 146.4 96.7 144.6 100.0 142.9C103.3 141.2 106.7 139.7 110.0 138.2C113.3 136.7 116.7 135.3 120.0 134.0C123.3 132.7 126.7 131.6 130.0 130.5C133.3 129.4 136.7 128.2 140.0 127.3C143.3 126.4 146.7 125.7 150.0 125.0C153.3 124.3 156.7 123.7 160.0 123.2C163.3 122.7 166.7 122.2 170.0 121.8C173.3 121.4 176.2 121.2 180.0 120.6C183.8 120.0 188.3 119.4 192.5 118.4C196.7 117.4 200.8 115.8 205.0 114.8C209.2 113.8 213.3 112.9 217.5 112.1C221.7 111.2 225.8 110.4 230.0 109.7C234.2 109.0 239.2 108.2 242.5 107.8C245.8 107.4 235.4 107.2 250.0 107.1C264.6 107.0 308.3 107.2 330.0 107.2C351.7 107.2 369.6 106.8 380.0 106.9C390.4 107.1 386.2 107.8 392.5 108.1C398.8 108.4 411.2 108.7 417.5 108.8C423.8 108.8 425.8 108.5 430.0 108.5C434.2 108.5 438.3 108.8 442.5 109.0C446.7 109.2 449.6 109.5 455.0 110.0C460.4 110.5 467.5 111.2 475.0 112.0C482.5 112.8 491.7 113.9 500.0 115.0C508.3 116.1 517.5 117.5 525.0 118.8C532.5 120.0 539.2 122.0 545.0 122.8C550.8 123.6 552.5 123.6 560.0 123.8C567.5 123.9 583.3 124.0 590.0 123.8C596.7 123.5 596.0 122.7 600.0 122.2C604.0 121.7 611.5 121.1 613.8 120.9" fill="none" stroke="#0a0aff" stroke-width="0.45" transform="translate(0.42 0.42)"/>
<line x1="4.63" y1="93.10" x2="4.63" y2="108.05" stroke="#111" stroke-width="1.15" />
<line x1="1.53" y1="100.25" x2="4.63" y2="100.25" stroke="#111" stroke-width="1.15" />
<line x1="4.63" y1="100.25" x2="7.73" y2="100.25" stroke="#111" stroke-width="1.15" />
<line x1="14.00" y1="95.20" x2="14.00" y2="106.20" stroke="#111" stroke-width="1.15" />
<line x1="10.90" y1="100.25" x2="14.00" y2="100.25" stroke="#111" stroke-width="1.15" />
<line x1="14.00" y1="99.00" x2="17.10" y2="99.00" stroke="#111" stroke-width="1.15" />
<line x1="23.37" y1="98.10" x2="23.37" y2="117.40" stroke="#111" stroke-width="1.15" />
<line x1="20.27" y1="98.40" x2="23.37" y2="98.40" stroke="#111" stroke-width="1.15" />
<line x1="23.37" y1="105.50" x2="26.47" y2="105.50" stroke="#111" stroke-width="1.15" />
<line x1="32.74" y1="90.95" x2="32.74" y2="112.80" stroke="#111" stroke-width="1.15" />
<line x1="29.64" y1="107.40" x2="32.74" y2="107.40" stroke="#111" stroke-width="1.15" />
<line x1="32.74" y1="107.40" x2="35.84" y2="107.40" stroke="#111" stroke-width="1.15" />
<line x1="42.11" y1="93.45" x2="42.11" y2="107.70" stroke="#111" stroke-width="1.15" />
<line x1="39.01" y1="107.40" x2="42.11" y2="107.40" stroke="#111" stroke-width="1.15" />
<line x1="42.11" y1="93.75" x2="45.21" y2="93.75" stroke="#111" stroke-width="1.15" />
<line x1="51.49" y1="86.80" x2="51.49" y2="106.55" stroke="#111" stroke-width="1.15" />
<line x1="48.39" y1="96.10" x2="51.49" y2="96.10" stroke="#111" stroke-width="1.15" />
<line x1="51.49" y1="98.60" x2="54.59" y2="98.60" stroke="#111" stroke-width="1.15" />
<line x1="60.86" y1="90.95" x2="60.86" y2="108.30" stroke="#111" stroke-width="1.15" />
<line x1="57.76" y1="100.25" x2="60.86" y2="100.25" stroke="#111" stroke-width="1.15" />
<line x1="60.86" y1="105.50" x2="63.96" y2="105.50" stroke="#111" stroke-width="1.15" />
<line x1="70.23" y1="90.95" x2="70.23" y2="119.30" stroke="#111" stroke-width="1.15" />
<line x1="67.13" y1="105.50" x2="70.23" y2="105.50" stroke="#111" stroke-width="1.15" />
<line x1="70.23" y1="114.25" x2="73.33" y2="114.25" stroke="#111" stroke-width="1.15" />
<line x1="79.60" y1="109.30" x2="79.60" y2="125.90" stroke="#111" stroke-width="1.15" />
<line x1="76.50" y1="112.10" x2="79.60" y2="112.10" stroke="#111" stroke-width="1.15" />
<line x1="79.60" y1="121.25" x2="82.70" y2="121.25" stroke="#111" stroke-width="1.15" />
<line x1="88.97" y1="113.95" x2="88.97" y2="140.30" stroke="#111" stroke-width="1.15" />
<line x1="85.87" y1="121.25" x2="88.97" y2="121.25" stroke="#111" stroke-width="1.15" />
<line x1="88.97" y1="128.00" x2="92.07" y2="128.00" stroke="#111" stroke-width="1.15" />
<line x1="98.34" y1="124.95" x2="98.34" y2="140.30" stroke="#111" stroke-width="1.15" />
<line x1="95.24" y1="127.50" x2="98.34" y2="127.50" stroke="#111" stroke-width="1.15" />
<line x1="98.34" y1="134.40" x2="101.44" y2="134.40" stroke="#111" stroke-width="1.15" />
<line x1="107.71" y1="118.70" x2="107.71" y2="139.05" stroke="#111" stroke-width="1.15" />
<line x1="104.61" y1="132.50" x2="107.71" y2="132.50" stroke="#111" stroke-width="1.15" />
<line x1="107.71" y1="119.40" x2="110.81" y2="119.40" stroke="#111" stroke-width="1.15" />
<line x1="117.08" y1="107.20" x2="117.08" y2="125.90" stroke="#111" stroke-width="1.15" />
<line x1="113.98" y1="119.40" x2="117.08" y2="119.40" stroke="#111" stroke-width="1.15" />
<line x1="117.08" y1="107.50" x2="120.18" y2="107.50" stroke="#111" stroke-width="1.15" />
<line x1="126.45" y1="97.80" x2="126.45" y2="125.90" stroke="#111" stroke-width="1.15" />
<line x1="123.35" y1="107.50" x2="126.45" y2="107.50" stroke="#111" stroke-width="1.15" />
<line x1="126.45" y1="119.40" x2="129.55" y2="119.40" stroke="#111" stroke-width="1.15" />
<line x1="135.82" y1="115.95" x2="135.82" y2="127.80" stroke="#111" stroke-width="1.15" />
<line x1="132.72" y1="121.25" x2="135.82" y2="121.25" stroke="#111" stroke-width="1.15" />
<line x1="135.82" y1="121.25" x2="138.92" y2="121.25" stroke="#111" stroke-width="1.15" />
<line x1="145.19" y1="97.80" x2="145.19" y2="123.80" stroke="#111" stroke-width="1.15" />
<line x1="142.09" y1="121.25" x2="145.19" y2="121.25" stroke="#111" stroke-width="1.15" />
<line x1="145.19" y1="112.25" x2="148.29" y2="112.25" stroke="#111" stroke-width="1.15" />
<line x1="154.57" y1="102.60" x2="154.57" y2="114.05" stroke="#111" stroke-width="1.15" />
<line x1="151.47" y1="112.25" x2="154.57" y2="112.25" stroke="#111" stroke-width="1.15" />
<line x1="154.57" y1="113.75" x2="157.67" y2="113.75" stroke="#111" stroke-width="1.15" />
<line x1="163.94" y1="109.10" x2="163.94" y2="121.55" stroke="#111" stroke-width="1.15" />
<line x1="160.84" y1="114.00" x2="163.94" y2="114.00" stroke="#111" stroke-width="1.15" />
<line x1="163.94" y1="114.00" x2="167.04" y2="114.00" stroke="#111" stroke-width="1.15" />
<line x1="173.31" y1="97.80" x2="173.31" y2="121.55" stroke="#111" stroke-width="1.15" />
<line x1="170.21" y1="112.25" x2="173.31" y2="112.25" stroke="#111" stroke-width="1.15" />
<line x1="173.31" y1="112.25" x2="176.41" y2="112.25" stroke="#111" stroke-width="1.15" />
<line x1="182.68" y1="102.60" x2="182.68" y2="117.55" stroke="#111" stroke-width="1.15" />
<line x1="179.58" y1="114.00" x2="182.68" y2="114.00" stroke="#111" stroke-width="1.15" />
<line x1="182.68" y1="109.60" x2="185.78" y2="109.60" stroke="#111" stroke-width="1.15" />
<line x1="192.05" y1="95.60" x2="192.05" y2="131.20" stroke="#111" stroke-width="1.15" />
<line x1="188.95" y1="109.60" x2="192.05" y2="109.60" stroke="#111" stroke-width="1.15" />
<line x1="192.05" y1="98.75" x2="195.15" y2="98.75" stroke="#111" stroke-width="1.15" />
<line x1="201.42" y1="93.10" x2="201.42" y2="106.20" stroke="#111" stroke-width="1.15" />
<line x1="198.32" y1="98.75" x2="201.42" y2="98.75" stroke="#111" stroke-width="1.15" />
<line x1="201.42" y1="96.10" x2="204.52" y2="96.10" stroke="#111" stroke-width="1.15" />
<line x1="210.79" y1="93.10" x2="210.79" y2="110.55" stroke="#111" stroke-width="1.15" />
<line x1="207.69" y1="96.10" x2="210.79" y2="96.10" stroke="#111" stroke-width="1.15" />
<line x1="210.79" y1="107.40" x2="213.89" y2="107.40" stroke="#111" stroke-width="1.15" />
<line x1="220.16" y1="102.70" x2="220.16" y2="114.90" stroke="#111" stroke-width="1.15" />
<line x1="217.06" y1="107.40" x2="220.16" y2="107.40" stroke="#111" stroke-width="1.15" />
<line x1="220.16" y1="110.00" x2="223.26" y2="110.00" stroke="#111" stroke-width="1.15" />
<line x1="229.53" y1="102.70" x2="229.53" y2="113.05" stroke="#111" stroke-width="1.15" />
<line x1="226.43" y1="110.00" x2="229.53" y2="110.00" stroke="#111" stroke-width="1.15" />
<line x1="229.53" y1="105.50" x2="232.63" y2="105.50" stroke="#111" stroke-width="1.15" />
<line x1="238.91" y1="95.60" x2="238.91" y2="114.90" stroke="#111" stroke-width="1.15" />
<line x1="235.81" y1="105.50" x2="238.91" y2="105.50" stroke="#111" stroke-width="1.15" />
<line x1="238.91" y1="107.40" x2="242.00" y2="107.40" stroke="#111" stroke-width="1.15" />
<line x1="248.28" y1="88.95" x2="248.28" y2="131.20" stroke="#111" stroke-width="1.15" />
<line x1="245.18" y1="109.00" x2="248.28" y2="109.00" stroke="#111" stroke-width="1.15" />
<line x1="248.28" y1="93.75" x2="251.38" y2="93.75" stroke="#111" stroke-width="1.15" />
<line x1="254.55" y1="93.75" x2="260.75" y2="93.75" stroke="#111" stroke-width="1.15" />
<line x1="267.02" y1="98.10" x2="267.02" y2="114.90" stroke="#111" stroke-width="1.15" />
<line x1="263.92" y1="100.50" x2="267.02" y2="100.50" stroke="#111" stroke-width="1.15" />
<line x1="267.02" y1="103.40" x2="270.12" y2="103.40" stroke="#111" stroke-width="1.15" />
<line x1="276.39" y1="95.60" x2="276.39" y2="124.05" stroke="#111" stroke-width="1.15" />
<line x1="273.29" y1="103.10" x2="276.39" y2="103.10" stroke="#111" stroke-width="1.15" />
<line x1="276.39" y1="117.25" x2="279.49" y2="117.25" stroke="#111" stroke-width="1.15" />
<line x1="285.76" y1="102.80" x2="285.76" y2="130.30" stroke="#111" stroke-width="1.15" />
<line x1="282.66" y1="114.40" x2="285.76" y2="114.40" stroke="#111" stroke-width="1.15" />
<line x1="285.76" y1="110.00" x2="288.86" y2="110.00" stroke="#111" stroke-width="1.15" />
<line x1="295.13" y1="90.95" x2="295.13" y2="122.20" stroke="#111" stroke-width="1.15" />
<line x1="292.03" y1="110.00" x2="295.13" y2="110.00" stroke="#111" stroke-width="1.15" />
<line x1="295.13" y1="110.00" x2="298.23" y2="110.00" stroke="#111" stroke-width="1.15" />
<line x1="304.50" y1="97.80" x2="304.50" y2="117.55" stroke="#111" stroke-width="1.15" />
<line x1="301.40" y1="107.50" x2="304.50" y2="107.50" stroke="#111" stroke-width="1.15" />
<line x1="304.50" y1="107.50" x2="307.60" y2="107.50" stroke="#111" stroke-width="1.15" />
<line x1="313.87" y1="74.95" x2="313.87" y2="117.55" stroke="#111" stroke-width="1.15" />
<line x1="310.77" y1="106.25" x2="313.87" y2="106.25" stroke="#111" stroke-width="1.15" />
<line x1="313.87" y1="91.50" x2="316.97" y2="91.50" stroke="#111" stroke-width="1.15" />
<line x1="323.24" y1="86.60" x2="323.24" y2="110.30" stroke="#111" stroke-width="1.15" />
<line x1="320.14" y1="89.60" x2="323.24" y2="89.60" stroke="#111" stroke-width="1.15" />
<line x1="323.24" y1="105.60" x2="326.34" y2="105.60" stroke="#111" stroke-width="1.15" />
<line x1="332.62" y1="90.95" x2="332.62" y2="115.30" stroke="#111" stroke-width="1.15" />
<line x1="329.51" y1="103.10" x2="332.62" y2="103.10" stroke="#111" stroke-width="1.15" />
<line x1="332.62" y1="91.50" x2="335.72" y2="91.50" stroke="#111" stroke-width="1.15" />
<line x1="341.99" y1="90.95" x2="341.99" y2="104.05" stroke="#111" stroke-width="1.15" />
<line x1="338.89" y1="91.50" x2="341.99" y2="91.50" stroke="#111" stroke-width="1.15" />
<line x1="341.99" y1="98.75" x2="345.09" y2="98.75" stroke="#111" stroke-width="1.15" />
<line x1="351.36" y1="90.95" x2="351.36" y2="112.80" stroke="#111" stroke-width="1.15" />
<line x1="348.26" y1="98.75" x2="351.36" y2="98.75" stroke="#111" stroke-width="1.15" />
<line x1="351.36" y1="107.50" x2="354.46" y2="107.50" stroke="#111" stroke-width="1.15" />
<line x1="360.73" y1="100.30" x2="360.73" y2="115.30" stroke="#111" stroke-width="1.15" />
<line x1="357.63" y1="105.60" x2="360.73" y2="105.60" stroke="#111" stroke-width="1.15" />
<line x1="360.73" y1="105.60" x2="363.83" y2="105.60" stroke="#111" stroke-width="1.15" />
<line x1="370.10" y1="102.80" x2="370.10" y2="112.80" stroke="#111" stroke-width="1.15" />
<line x1="367.00" y1="105.60" x2="370.10" y2="105.60" stroke="#111" stroke-width="1.15" />
<line x1="370.10" y1="109.60" x2="373.20" y2="109.60" stroke="#111" stroke-width="1.15" />
<line x1="379.47" y1="106.60" x2="379.47" y2="126.30" stroke="#111" stroke-width="1.15" />
<line x1="376.37" y1="109.60" x2="379.47" y2="109.60" stroke="#111" stroke-width="1.15" />
<line x1="379.47" y1="119.40" x2="382.57" y2="119.40" stroke="#111" stroke-width="1.15" />
<line x1="388.84" y1="114.10" x2="388.84" y2="124.05" stroke="#111" stroke-width="1.15" />
<line x1="385.74" y1="119.40" x2="388.84" y2="119.40" stroke="#111" stroke-width="1.15" />
<line x1="388.84" y1="114.40" x2="391.94" y2="114.40" stroke="#111" stroke-width="1.15" />
<line x1="398.21" y1="107.20" x2="398.21" y2="124.05" stroke="#111" stroke-width="1.15" />
<line x1="395.11" y1="114.40" x2="398.21" y2="114.40" stroke="#111" stroke-width="1.15" />
<line x1="398.21" y1="109.60" x2="401.31" y2="109.60" stroke="#111" stroke-width="1.15" />
<line x1="407.58" y1="107.20" x2="407.58" y2="117.55" stroke="#111" stroke-width="1.15" />
<line x1="404.48" y1="112.25" x2="407.58" y2="112.25" stroke="#111" stroke-width="1.15" />
<line x1="407.58" y1="112.25" x2="410.68" y2="112.25" stroke="#111" stroke-width="1.15" />
<line x1="416.95" y1="107.20" x2="416.95" y2="124.05" stroke="#111" stroke-width="1.15" />
<line x1="413.85" y1="109.60" x2="416.95" y2="109.60" stroke="#111" stroke-width="1.15" />
<line x1="416.95" y1="112.25" x2="420.05" y2="112.25" stroke="#111" stroke-width="1.15" />
<line x1="426.32" y1="104.70" x2="426.32" y2="124.05" stroke="#111" stroke-width="1.15" />
<line x1="423.22" y1="112.25" x2="426.32" y2="112.25" stroke="#111" stroke-width="1.15" />
<line x1="426.32" y1="119.40" x2="429.43" y2="119.40" stroke="#111" stroke-width="1.15" />
<line x1="435.70" y1="102.80" x2="435.70" y2="128.40" stroke="#111" stroke-width="1.15" />
<line x1="432.60" y1="119.40" x2="435.70" y2="119.40" stroke="#111" stroke-width="1.15" />
<line x1="435.70" y1="112.25" x2="438.80" y2="112.25" stroke="#111" stroke-width="1.15" />
<line x1="445.07" y1="104.95" x2="445.07" y2="130.90" stroke="#111" stroke-width="1.15" />
<line x1="441.97" y1="112.25" x2="445.07" y2="112.25" stroke="#111" stroke-width="1.15" />
<line x1="445.07" y1="107.50" x2="448.17" y2="107.50" stroke="#111" stroke-width="1.15" />
<line x1="454.44" y1="95.70" x2="454.44" y2="160.05" stroke="#111" stroke-width="1.15" />
<line x1="451.34" y1="105.60" x2="454.44" y2="105.60" stroke="#111" stroke-width="1.15" />
<line x1="454.44" y1="150.60" x2="457.54" y2="150.60" stroke="#111" stroke-width="1.15" />
<line x1="463.81" y1="140.70" x2="463.81" y2="157.80" stroke="#111" stroke-width="1.15" />
<line x1="460.71" y1="150.60" x2="463.81" y2="150.60" stroke="#111" stroke-width="1.15" />
<line x1="463.81" y1="146.00" x2="466.91" y2="146.00" stroke="#111" stroke-width="1.15" />
<line x1="473.18" y1="140.70" x2="473.18" y2="155.90" stroke="#111" stroke-width="1.15" />
<line x1="470.08" y1="146.00" x2="473.18" y2="146.00" stroke="#111" stroke-width="1.15" />
<line x1="473.18" y1="150.60" x2="476.28" y2="150.60" stroke="#111" stroke-width="1.15" />
<line x1="482.55" y1="131.95" x2="482.55" y2="151.30" stroke="#111" stroke-width="1.15" />
<line x1="479.45" y1="148.40" x2="482.55" y2="148.40" stroke="#111" stroke-width="1.15" />
<line x1="482.55" y1="141.00" x2="485.65" y2="141.00" stroke="#111" stroke-width="1.15" />
<line x1="491.92" y1="136.60" x2="491.92" y2="189.30" stroke="#111" stroke-width="1.15" />
<line x1="488.82" y1="141.00" x2="491.92" y2="141.00" stroke="#111" stroke-width="1.15" />
<line x1="491.92" y1="184.40" x2="495.02" y2="184.40" stroke="#111" stroke-width="1.15" />
<line x1="501.29" y1="174.70" x2="501.29" y2="196.55" stroke="#111" stroke-width="1.15" />
<line x1="498.19" y1="186.60" x2="501.29" y2="186.60" stroke="#111" stroke-width="1.15" />
<line x1="501.29" y1="184.40" x2="504.39" y2="184.40" stroke="#111" stroke-width="1.15" />
<line x1="510.66" y1="172.20" x2="510.66" y2="198.80" stroke="#111" stroke-width="1.15" />
<line x1="507.56" y1="186.60" x2="510.66" y2="186.60" stroke="#111" stroke-width="1.15" />
<line x1="510.66" y1="188.75" x2="513.76" y2="188.75" stroke="#111" stroke-width="1.15" />
<line x1="520.03" y1="156.60" x2="520.03" y2="189.05" stroke="#111" stroke-width="1.15" />
<line x1="516.93" y1="188.75" x2="520.03" y2="188.75" stroke="#111" stroke-width="1.15" />
<line x1="520.03" y1="172.50" x2="523.13" y2="172.50" stroke="#111" stroke-width="1.15" />
<line x1="529.41" y1="158.70" x2="529.41" y2="189.30" stroke="#111" stroke-width="1.15" />
<line x1="526.31" y1="172.50" x2="529.41" y2="172.50" stroke="#111" stroke-width="1.15" />
<line x1="529.41" y1="175.25" x2="532.51" y2="175.25" stroke="#111" stroke-width="1.15" />
<line x1="538.78" y1="172.20" x2="538.78" y2="196.55" stroke="#111" stroke-width="1.15" />
<line x1="535.68" y1="177.50" x2="538.78" y2="177.50" stroke="#111" stroke-width="1.15" />
<line x1="538.78" y1="182.25" x2="541.88" y2="182.25" stroke="#111" stroke-width="1.15" />
<line x1="548.15" y1="174.70" x2="548.15" y2="205.90" stroke="#111" stroke-width="1.15" />
<line x1="545.05" y1="182.25" x2="548.15" y2="182.25" stroke="#111" stroke-width="1.15" />
<line x1="548.15" y1="203.10" x2="551.25" y2="203.10" stroke="#111" stroke-width="1.15" />
<line x1="557.52" y1="120.10" x2="557.52" y2="205.55" stroke="#111" stroke-width="1.15" />
<line x1="554.42" y1="204.40" x2="557.52" y2="204.40" stroke="#111" stroke-width="1.15" />
<line x1="557.52" y1="127.90" x2="560.62" y2="127.90" stroke="#111" stroke-width="1.15" />
<line x1="566.89" y1="100.45" x2="566.89" y2="135.70" stroke="#111" stroke-width="1.15" />
<line x1="563.79" y1="127.90" x2="566.89" y2="127.90" stroke="#111" stroke-width="1.15" />
<line x1="566.89" y1="107.50" x2="569.99" y2="107.50" stroke="#111" stroke-width="1.15" />
<line x1="576.26" y1="104.70" x2="576.26" y2="153.30" stroke="#111" stroke-width="1.15" />
<line x1="573.16" y1="109.50" x2="576.26" y2="109.50" stroke="#111" stroke-width="1.15" />
<line x1="576.26" y1="137.00" x2="579.36" y2="137.00" stroke="#111" stroke-width="1.15" />
<line x1="585.63" y1="102.60" x2="585.63" y2="140.05" stroke="#111" stroke-width="1.15" />
<line x1="582.53" y1="139.50" x2="585.63" y2="139.50" stroke="#111" stroke-width="1.15" />
<line x1="585.63" y1="127.90" x2="588.73" y2="127.90" stroke="#111" stroke-width="1.15" />
<line x1="595.00" y1="41.10" x2="595.00" y2="131.05" stroke="#111" stroke-width="1.15" />
<line x1="591.90" y1="127.90" x2="595.00" y2="127.90" stroke="#111" stroke-width="1.15" />
<line x1="595.00" y1="44.10" x2="598.10" y2="44.10" stroke="#111" stroke-width="1.15" />
<line x1="604.37" y1="41.10" x2="604.37" y2="69.80" stroke="#111" stroke-width="1.15" />
<line x1="601.27" y1="46.75" x2="604.37" y2="46.75" stroke="#111" stroke-width="1.15" />
<line x1="604.37" y1="60.10" x2="607.47" y2="60.10" stroke="#111" stroke-width="1.15" />
<line x1="613.75" y1="57.30" x2="613.75" y2="74.80" stroke="#111" stroke-width="1.15" />
<line x1="610.64" y1="60.10" x2="613.75" y2="60.10" stroke="#111" stroke-width="1.15" />
<line x1="613.75" y1="64.75" x2="616.85" y2="64.75" stroke="#111" stroke-width="1.15" />
<circle cx="566.9" cy="128.8" r="3.7" fill="#c6ccd4" stroke="#aab2bd" stroke-width="0.5"/>
<path d="M566.9 126.5 l1.6 2.3 l-1.6 2.3 l-1.6 -2.3z" fill="#1e6fe0"/>
<text x="547.20" y="216.92" font-size="7" fill="#8b1a2a" font-weight="normal"  >1</text>
<text x="556.60" y="216.92" font-size="7" fill="#8b1a2a" font-weight="normal"  >2</text>
<text x="564.80" y="148.52" font-size="7" fill="#d8405a" font-weight="normal"  >3</text>
<path d="M611.6 33.8 h4.6 l-2.3 2.6z" fill="#9a9a9a"/>
<polyline points="-4.74,270.00 4.63,283.75 14.00,291.25 23.37,288.25 32.74,285.75 42.11,272.50 51.49,260.75 60.86,261.75 70.23,281.25 79.60,295.00 88.97,297.50 98.34,299.25 107.71,292.00 117.08,276.25 126.45,263.00 135.82,261.75 145.19,268.00 154.57,268.75 163.94,267.50 173.31,274.25 182.68,272.00 192.05,257.50 201.42,244.50 210.79,244.50 220.16,254.50 229.53,260.50 238.91,265.75 248.28,255.50 257.65,248.75 267.02,245.75 276.39,260.00 285.76,268.75 295.13,273.00 304.50,267.00 313.87,261.75 323.24,264.25 332.62,262.50 341.99,268.75 351.36,274.50 360.73,283.00 370.10,291.25 379.47,292.50 388.84,291.25 398.21,282.00 407.58,270.00 416.95,258.25 426.32,267.50 435.70,266.75 445.07,262.00 454.44,278.00 463.81,287.50 473.18,297.50 482.55,294.50 491.92,299.25 501.29,298.25 510.66,302.50 520.03,292.00 529.41,287.50 538.78,280.50 548.15,289.50 557.52,266.25 566.89,250.75 576.26,244.25 585.63,248.75 595.00,245.00 604.37,242.00 613.75,239.50" fill="none" stroke="#35b8b0" stroke-width="0.9" stroke-linejoin="round" />
<polyline points="-4.74,256.00 4.63,268.75 14.00,281.25 23.37,287.00 32.74,288.75 42.11,283.75 51.49,273.75 60.86,265.00 70.23,267.50 79.60,280.00 88.97,292.00 98.34,297.50 107.71,296.75 117.08,288.75 126.45,276.75 135.82,266.75 145.19,264.25 154.57,265.75 163.94,267.50 173.31,270.00 182.68,271.25 192.05,268.00 201.42,257.50 210.79,251.25 220.16,248.00 229.53,253.25 238.91,260.00 248.28,260.75 257.65,257.00 267.02,250.00 276.39,251.25 285.76,258.75 295.13,266.25 304.50,270.00 313.87,267.50 323.24,264.50 332.62,263.00 341.99,265.00 351.36,270.00 360.73,276.25 370.10,283.75 379.47,288.75 388.84,291.25 398.21,289.50 407.58,283.75 416.95,272.50 426.32,265.50 435.70,264.25 445.07,265.00 454.44,269.50 463.81,276.25 473.18,288.75 482.55,293.75 491.92,297.50 501.29,298.00 510.66,300.00 520.03,297.50 529.41,294.50 538.78,287.00 548.15,285.00 557.52,280.00 566.89,267.50 576.26,252.50 585.63,247.00 595.00,246.25 604.37,244.50 613.75,242.00" fill="none" stroke="#ff4a4a" stroke-width="0.9" stroke-linejoin="round" stroke-dasharray="2 1.5"/>
<rect x="68.73" y="325.70" width="3.00" height="1.30" fill="#0d8a1a" />
<rect x="78.10" y="325.70" width="3.00" height="1.30" fill="#ff2a2a" />
<rect x="87.47" y="325.70" width="3.00" height="1.30" fill="#ff2a2a" />
<rect x="106.21" y="325.70" width="3.00" height="1.30" fill="#0d8a1a" />
<rect x="115.58" y="325.70" width="3.00" height="1.30" fill="#ff2a2a" />
<rect x="124.95" y="325.70" width="3.00" height="1.30" fill="#0d8a1a" />
<rect x="171.81" y="325.70" width="3.00" height="1.30" fill="#0d8a1a" />
<rect x="181.18" y="325.70" width="3.00" height="1.30" fill="#ff2a2a" />
<rect x="190.55" y="325.70" width="3.00" height="1.30" fill="#0d8a1a" />
<rect x="199.92" y="325.70" width="3.00" height="1.30" fill="#ff2a2a" />
<rect x="209.29" y="325.70" width="3.00" height="1.30" fill="#ff2a2a" />
<rect x="218.66" y="325.70" width="3.00" height="1.30" fill="#0d8a1a" />
<rect x="228.03" y="325.70" width="3.00" height="1.30" fill="#ff2a2a" />
<rect x="237.41" y="325.70" width="3.00" height="1.30" fill="#ff2a2a" />
<rect x="246.78" y="325.70" width="3.00" height="1.30" fill="#0d8a1a" />
<rect x="265.52" y="325.70" width="3.00" height="1.30" fill="#0d8a1a" />
<rect x="274.89" y="325.70" width="3.00" height="1.30" fill="#0d8a1a" />
<rect x="284.26" y="325.70" width="3.00" height="1.30" fill="#0d8a1a" />
<rect x="293.63" y="325.70" width="3.00" height="1.30" fill="#ff2a2a" />
<rect x="303.00" y="325.70" width="3.00" height="1.30" fill="#ff2a2a" />
<rect x="312.37" y="325.70" width="3.00" height="1.30" fill="#0d8a1a" />
<rect x="321.74" y="325.70" width="3.00" height="1.30" fill="#ff2a2a" />
<rect x="331.12" y="325.70" width="3.00" height="1.30" fill="#ff2a2a" />
<rect x="377.97" y="325.70" width="3.00" height="1.30" fill="#0d8a1a" />
<rect x="415.45" y="325.70" width="3.00" height="1.30" fill="#0d8a1a" />
<rect x="424.82" y="325.70" width="3.00" height="1.30" fill="#0d8a1a" />
<rect x="434.20" y="325.20" width="3.00" height="1.80" fill="#0d8a1a" />
<rect x="443.57" y="325.20" width="3.00" height="1.80" fill="#ff2a2a" />
<rect x="452.94" y="325.20" width="3.00" height="1.80" fill="#0d8a1a" />
<rect x="462.31" y="325.70" width="3.00" height="1.30" fill="#ff2a2a" />
<rect x="471.68" y="325.70" width="3.00" height="1.30" fill="#ff2a2a" />
<rect x="481.05" y="325.70" width="3.00" height="1.30" fill="#ff2a2a" />
<rect x="490.42" y="325.70" width="3.00" height="1.30" fill="#0d8a1a" />
<rect x="499.79" y="325.70" width="3.00" height="1.30" fill="#0d8a1a" />
<rect x="509.16" y="325.70" width="3.00" height="1.30" fill="#ff2a2a" />
<rect x="518.53" y="325.70" width="3.00" height="1.30" fill="#0d8a1a" />
<rect x="527.91" y="325.70" width="3.00" height="1.30" fill="#0d8a1a" />
<rect x="537.28" y="325.70" width="3.00" height="1.30" fill="#ff2a2a" />
<rect x="546.65" y="325.20" width="3.00" height="1.80" fill="#0d8a1a" />
<rect x="556.02" y="313.90" width="3.00" height="13.10" fill="#0d8a1a" />
<rect x="565.39" y="320.00" width="3.00" height="7.00" fill="#ff2a2a" />
<rect x="574.76" y="320.80" width="3.00" height="6.20" fill="#ff2a2a" />
<rect x="584.13" y="322.50" width="3.00" height="4.50" fill="#ff2a2a" />
<rect x="593.50" y="320.00" width="3.00" height="7.00" fill="#0d8a1a" />
<rect x="602.87" y="323.60" width="3.00" height="3.40" fill="#ff2a2a" />
<rect x="612.25" y="325.60" width="3.00" height="1.40" fill="#ff2a2a" />
<text x="19.50" y="41.94" font-size="6.5" fill="#111" font-weight="normal" textLength="29.50" lengthAdjust="spacingAndGlyphs" stroke="#111" stroke-width="0.17">EPH19,M30</text>
<rect x="-1.00" y="36.40" width="7.00" height="6.20" fill="#e8e8f4" stroke="#8a8aa6" stroke-width="0.5"/>
<line x1="0.00" y1="37.80" x2="2.40" y2="37.80" stroke="#e04848" stroke-width="0.9" />
<line x1="0.00" y1="39.50" x2="2.40" y2="39.50" stroke="#e04848" stroke-width="0.9" />
<line x1="0.00" y1="41.20" x2="2.40" y2="41.20" stroke="#e04848" stroke-width="0.9" />
<line x1="3.00" y1="37.80" x2="5.40" y2="37.80" stroke="#4a6fe0" stroke-width="0.9" />
<line x1="3.00" y1="39.50" x2="5.40" y2="39.50" stroke="#4a6fe0" stroke-width="0.9" />
<line x1="3.00" y1="41.20" x2="5.40" y2="41.20" stroke="#4a6fe0" stroke-width="0.9" />
<rect x="8.20" y="37.20" width="2.30" height="5.60" fill="#2f5fe0" />
<rect x="11.00" y="39.30" width="2.00" height="3.50" fill="#2f5fe0" />
<rect x="13.40" y="36.60" width="2.60" height="6.20" fill="#e03a3a" />
<rect x="10.50" y="36.60" width="1.60" height="1.60" fill="#e03a3a" />
<text x="-1.60" y="124.74" font-size="6.5" fill="#111" font-weight="normal" textLength="56.60" lengthAdjust="spacingAndGlyphs" stroke="#111" stroke-width="0.17">#21419929 buy 120.00</text>
<text x="-3.20" y="238.64" font-size="6.5" fill="#111" font-weight="normal" textLength="60.20" lengthAdjust="spacingAndGlyphs" stroke="#111" stroke-width="0.17">Stoch(5,3,3) 88.82 86.19</text>
<text x="-3.00" y="320.34" font-size="6.5" fill="#111" font-weight="normal" textLength="35.50" lengthAdjust="spacingAndGlyphs" stroke="#111" stroke-width="0.17">Volumes 6604</text>
<line x1="760.90" y1="44.25" x2="763.50" y2="44.25" stroke="#333" stroke-width="1.0" />
<text x="763.80" y="46.79" font-size="6.5" fill="#111" font-weight="normal" textLength="19.60" lengthAdjust="spacingAndGlyphs" stroke="#111" stroke-width="0.17">2783.75</text>
<line x1="760.90" y1="85.18" x2="763.50" y2="85.18" stroke="#333" stroke-width="1.0" />
<text x="763.80" y="87.72" font-size="6.5" fill="#111" font-weight="normal" textLength="19.60" lengthAdjust="spacingAndGlyphs" stroke="#111" stroke-width="0.17">2779.25</text>
<line x1="760.90" y1="105.64" x2="763.50" y2="105.64" stroke="#333" stroke-width="1.0" />
<text x="763.80" y="108.18" font-size="6.5" fill="#111" font-weight="normal" textLength="19.60" lengthAdjust="spacingAndGlyphs" stroke="#111" stroke-width="0.17">2777.00</text>
<line x1="760.90" y1="126.10" x2="763.50" y2="126.10" stroke="#333" stroke-width="1.0" />
<text x="763.80" y="128.64" font-size="6.5" fill="#111" font-weight="normal" textLength="19.60" lengthAdjust="spacingAndGlyphs" stroke="#111" stroke-width="0.17">2774.75</text>
<line x1="760.90" y1="146.56" x2="763.50" y2="146.56" stroke="#333" stroke-width="1.0" />
<text x="763.80" y="149.10" font-size="6.5" fill="#111" font-weight="normal" textLength="19.60" lengthAdjust="spacingAndGlyphs" stroke="#111" stroke-width="0.17">2772.50</text>
<line x1="760.90" y1="167.03" x2="763.50" y2="167.03" stroke="#333" stroke-width="1.0" />
<text x="763.80" y="169.57" font-size="6.5" fill="#111" font-weight="normal" textLength="19.60" lengthAdjust="spacingAndGlyphs" stroke="#111" stroke-width="0.17">2770.25</text>
<line x1="760.90" y1="187.49" x2="763.50" y2="187.49" stroke="#333" stroke-width="1.0" />
<text x="763.80" y="190.03" font-size="6.5" fill="#111" font-weight="normal" textLength="19.60" lengthAdjust="spacingAndGlyphs" stroke="#111" stroke-width="0.17">2768.00</text>
<line x1="760.90" y1="207.95" x2="763.50" y2="207.95" stroke="#333" stroke-width="1.0" />
<text x="763.80" y="210.49" font-size="6.5" fill="#111" font-weight="normal" textLength="19.60" lengthAdjust="spacingAndGlyphs" stroke="#111" stroke-width="0.17">2765.75</text>
<rect x="762.30" y="61.90" width="22.90" height="6.40" fill="#000" rx="0.6"/>
<text x="764.00" y="67.54" font-size="6.5" fill="#fff" font-weight="normal" textLength="19.70" lengthAdjust="spacingAndGlyphs" >2781.50</text>
<line x1="760.90" y1="233.90" x2="763.50" y2="233.90" stroke="#333" stroke-width="1.0" />
<text x="763.80" y="236.44" font-size="6.5" fill="#111" font-weight="normal" textLength="16.16" lengthAdjust="spacingAndGlyphs" stroke="#111" stroke-width="0.17">100.00</text>
<line x1="760.90" y1="247.00" x2="763.50" y2="247.00" stroke="#333" stroke-width="1.0" />
<text x="763.80" y="249.54" font-size="6.5" fill="#111" font-weight="normal" textLength="13.30" lengthAdjust="spacingAndGlyphs" stroke="#111" stroke-width="0.17">80.00</text>
<line x1="760.90" y1="295.50" x2="763.50" y2="295.50" stroke="#333" stroke-width="1.0" />
<text x="763.80" y="298.04" font-size="6.5" fill="#111" font-weight="normal" textLength="13.30" lengthAdjust="spacingAndGlyphs" stroke="#111" stroke-width="0.17">20.00</text>
<line x1="760.90" y1="307.60" x2="763.50" y2="307.60" stroke="#333" stroke-width="1.0" />
<text x="763.80" y="310.14" font-size="6.5" fill="#111" font-weight="normal" textLength="10.44" lengthAdjust="spacingAndGlyphs" stroke="#111" stroke-width="0.17">0.00</text>
<text x="763.80" y="318.64" font-size="6.5" fill="#111" font-weight="normal" textLength="14.50" lengthAdjust="spacingAndGlyphs" stroke="#111" stroke-width="0.17">70118</text>
<text x="763.80" y="326.54" font-size="6.5" fill="#111" font-weight="normal" textLength="2.90" lengthAdjust="spacingAndGlyphs" stroke="#111" stroke-width="0.17">0</text>
<line x1="760.90" y1="313.50" x2="763.50" y2="313.50" stroke="#333" stroke-width="1.0" />
<line x1="-4.74" y1="327.00" x2="-4.74" y2="329.20" stroke="#444" stroke-width="0.8" />
<text x="-4.44" y="334.94" font-size="6.5" fill="#111" font-weight="normal" textLength="29.60" lengthAdjust="spacingAndGlyphs" stroke="#111" stroke-width="0.17">18 Feb 2019</text>
<line x1="32.74" y1="327.00" x2="32.74" y2="329.20" stroke="#444" stroke-width="0.8" />
<text x="33.04" y="334.94" font-size="6.5" fill="#111" font-weight="normal" textLength="32.00" lengthAdjust="spacingAndGlyphs" stroke="#111" stroke-width="0.17">18 Feb 06:00</text>
<line x1="70.23" y1="327.00" x2="70.23" y2="329.20" stroke="#444" stroke-width="0.8" />
<text x="70.53" y="334.94" font-size="6.5" fill="#111" font-weight="normal" textLength="32.00" lengthAdjust="spacingAndGlyphs" stroke="#111" stroke-width="0.17">18 Feb 08:00</text>
<line x1="107.71" y1="327.00" x2="107.71" y2="329.20" stroke="#444" stroke-width="0.8" />
<text x="108.01" y="334.94" font-size="6.5" fill="#111" font-weight="normal" textLength="32.00" lengthAdjust="spacingAndGlyphs" stroke="#111" stroke-width="0.17">18 Feb 10:00</text>
<line x1="145.19" y1="327.00" x2="145.19" y2="329.20" stroke="#444" stroke-width="0.8" />
<text x="145.50" y="334.94" font-size="6.5" fill="#111" font-weight="normal" textLength="32.00" lengthAdjust="spacingAndGlyphs" stroke="#111" stroke-width="0.17">18 Feb 12:00</text>
<line x1="182.68" y1="327.00" x2="182.68" y2="329.20" stroke="#444" stroke-width="0.8" />
<text x="182.98" y="334.94" font-size="6.5" fill="#111" font-weight="normal" textLength="32.00" lengthAdjust="spacingAndGlyphs" stroke="#111" stroke-width="0.17">18 Feb 14:00</text>
<line x1="220.16" y1="327.00" x2="220.16" y2="329.20" stroke="#444" stroke-width="0.8" />
<text x="220.46" y="334.94" font-size="6.5" fill="#111" font-weight="normal" textLength="32.00" lengthAdjust="spacingAndGlyphs" stroke="#111" stroke-width="0.17">18 Feb 16:00</text>
<line x1="257.65" y1="327.00" x2="257.65" y2="329.20" stroke="#444" stroke-width="0.8" />
<text x="257.95" y="334.94" font-size="6.5" fill="#111" font-weight="normal" textLength="32.00" lengthAdjust="spacingAndGlyphs" stroke="#111" stroke-width="0.17">18 Feb 22:30</text>
<line x1="295.13" y1="327.00" x2="295.13" y2="329.20" stroke="#444" stroke-width="0.8" />
<text x="295.43" y="334.94" font-size="6.5" fill="#111" font-weight="normal" textLength="32.00" lengthAdjust="spacingAndGlyphs" stroke="#111" stroke-width="0.17">19 Feb 00:30</text>
<line x1="332.62" y1="327.00" x2="332.62" y2="329.20" stroke="#444" stroke-width="0.8" />
<text x="332.92" y="334.94" font-size="6.5" fill="#111" font-weight="normal" textLength="32.00" lengthAdjust="spacingAndGlyphs" stroke="#111" stroke-width="0.17">19 Feb 02:30</text>
<line x1="370.10" y1="327.00" x2="370.10" y2="329.20" stroke="#444" stroke-width="0.8" />
<text x="370.40" y="334.94" font-size="6.5" fill="#111" font-weight="normal" textLength="32.00" lengthAdjust="spacingAndGlyphs" stroke="#111" stroke-width="0.17">19 Feb 04:30</text>
<line x1="407.58" y1="327.00" x2="407.58" y2="329.20" stroke="#444" stroke-width="0.8" />
<text x="407.88" y="334.94" font-size="6.5" fill="#111" font-weight="normal" textLength="32.00" lengthAdjust="spacingAndGlyphs" stroke="#111" stroke-width="0.17">19 Feb 06:30</text>
<line x1="445.07" y1="327.00" x2="445.07" y2="329.20" stroke="#444" stroke-width="0.8" />
<text x="445.37" y="334.94" font-size="6.5" fill="#111" font-weight="normal" textLength="32.00" lengthAdjust="spacingAndGlyphs" stroke="#111" stroke-width="0.17">19 Feb 08:30</text>
<line x1="482.55" y1="327.00" x2="482.55" y2="329.20" stroke="#444" stroke-width="0.8" />
<text x="482.85" y="334.94" font-size="6.5" fill="#111" font-weight="normal" textLength="32.00" lengthAdjust="spacingAndGlyphs" stroke="#111" stroke-width="0.17">19 Feb 10:30</text>
<line x1="520.03" y1="327.00" x2="520.03" y2="329.20" stroke="#444" stroke-width="0.8" />
<text x="520.33" y="334.94" font-size="6.5" fill="#111" font-weight="normal" textLength="32.00" lengthAdjust="spacingAndGlyphs" stroke="#111" stroke-width="0.17">19 Feb 12:30</text>
<line x1="557.52" y1="327.00" x2="557.52" y2="329.20" stroke="#444" stroke-width="0.8" />
<text x="557.82" y="334.94" font-size="6.5" fill="#111" font-weight="normal" textLength="32.00" lengthAdjust="spacingAndGlyphs" stroke="#111" stroke-width="0.17">19 Feb 14:30</text>
<line x1="595.00" y1="327.00" x2="595.00" y2="329.20" stroke="#444" stroke-width="0.8" />
<text x="595.30" y="334.94" font-size="6.5" fill="#111" font-weight="normal" textLength="32.00" lengthAdjust="spacingAndGlyphs" stroke="#111" stroke-width="0.17">19 Feb 16:30</text>
<rect x="0.00" y="338.00" width="792.00" height="13.20" fill="#ffffff" />
<rect x="44.40" y="340.70" width="747.60" height="14.00" fill="#f0f0f0" />
<rect x="0.00" y="351.00" width="44.40" height="3.40" fill="#f0f0f0" />
<path d="M792.0 340.7 H44.4 V351 H0" fill="none" stroke="#444" stroke-width="0.9"/>
<text x="3.00" y="348.79" font-size="7.2" fill="#1a1a1a" font-weight="normal" textLength="34.00" lengthAdjust="spacingAndGlyphs" >EPH19,M30</text>
<text x="51.00" y="348.99" font-size="7.2" fill="#7e7e7e" font-weight="normal" textLength="39.00" lengthAdjust="spacingAndGlyphs" >EU6H19,M30</text>
<text x="104.40" y="348.99" font-size="7.2" fill="#7e7e7e" font-weight="normal" textLength="34.35" lengthAdjust="spacingAndGlyphs" >RTYH19,H4</text>
<text x="153.00" y="348.99" font-size="7.2" fill="#7e7e7e" font-weight="normal" textLength="31.40" lengthAdjust="spacingAndGlyphs" >DDH19,H1</text>
<text x="200.00" y="348.99" font-size="7.2" fill="#7e7e7e" font-weight="normal" textLength="33.75" lengthAdjust="spacingAndGlyphs" >CLEH19,M1</text>
<line x1="96.90" y1="342.30" x2="96.90" y2="349.80" stroke="#5a5a5a" stroke-width="0.7" />
<line x1="146.50" y1="342.30" x2="146.50" y2="349.80" stroke="#5a5a5a" stroke-width="0.7" />
<line x1="192.50" y1="342.30" x2="192.50" y2="349.80" stroke="#5a5a5a" stroke-width="0.7" />
<line x1="241.30" y1="342.30" x2="241.30" y2="349.80" stroke="#5a5a5a" stroke-width="0.7" />
<text x="770.30" y="348.66" font-size="8.5" fill="#6e6e6e" font-weight="normal"  >‹</text>
<text x="783.00" y="348.66" font-size="8.5" fill="#6e6e6e" font-weight="normal"  >›</text>
<rect x="0.00" y="351.20" width="792.00" height="47.30" fill="#f0f0f0" />
<rect x="2.30" y="354.40" width="789.70" height="26.00" fill="#ffffff" />
<line x1="2.30" y1="354.30" x2="792.00" y2="354.30" stroke="#d4d4d4" stroke-width="0.7" />
<rect x="0.00" y="353.50" width="1.40" height="45.00" fill="#dbe8f7" />
<line x1="2.20" y1="353.80" x2="2.20" y2="398.00" stroke="#9db8dc" stroke-width="0.6" />
<text x="6.00" y="364.59" font-size="7.2" fill="#222" font-weight="normal" textLength="26.00" lengthAdjust="spacingAndGlyphs" >Символ</text>
<text x="91.90" y="364.59" font-size="7.2" fill="#222" font-weight="normal" textLength="17.50" lengthAdjust="spacingAndGlyphs" >Тикет</text>
<text x="205.00" y="364.59" font-size="7.2" fill="#222" font-weight="normal" textLength="20.00" lengthAdjust="spacingAndGlyphs" >Время</text>
<text x="278.80" y="364.59" font-size="7.2" fill="#222" font-weight="normal" textLength="12.40" lengthAdjust="spacingAndGlyphs" >Тип</text>
<text x="335.00" y="364.59" font-size="7.2" fill="#222" font-weight="normal" textLength="21.20" lengthAdjust="spacingAndGlyphs" >Объем</text>
<text x="405.50" y="364.59" font-size="7.2" fill="#222" font-weight="normal" textLength="16.50" lengthAdjust="spacingAndGlyphs" >Цена</text>
<text x="474.50" y="364.59" font-size="7.2" fill="#222" font-weight="normal" textLength="13.00" lengthAdjust="spacingAndGlyphs" >S / L</text>
<text x="538.80" y="364.59" font-size="7.2" fill="#222" font-weight="normal" textLength="14.20" lengthAdjust="spacingAndGlyphs" >T / P</text>
<text x="603.00" y="364.59" font-size="7.2" fill="#222" font-weight="normal" textLength="15.80" lengthAdjust="spacingAndGlyphs" >Цена</text>
<text x="668.00" y="364.59" font-size="7.2" fill="#222" font-weight="normal" textLength="16.50" lengthAdjust="spacingAndGlyphs" >Своп</text>
<text x="747.00" y="364.59" font-size="7.2" fill="#222" font-weight="normal" textLength="30.00" lengthAdjust="spacingAndGlyphs" >Прибыль</text>
<line x1="88.00" y1="355.00" x2="88.00" y2="368.60" stroke="#e2e2e2" stroke-width="0.7" />
<line x1="146.50" y1="355.00" x2="146.50" y2="368.60" stroke="#e2e2e2" stroke-width="0.7" />
<line x1="228.80" y1="355.00" x2="228.80" y2="368.60" stroke="#e2e2e2" stroke-width="0.7" />
<line x1="293.80" y1="355.00" x2="293.80" y2="368.60" stroke="#e2e2e2" stroke-width="0.7" />
<line x1="359.50" y1="355.00" x2="359.50" y2="368.60" stroke="#e2e2e2" stroke-width="0.7" />
<line x1="425.00" y1="355.00" x2="425.00" y2="368.60" stroke="#e2e2e2" stroke-width="0.7" />
<line x1="491.30" y1="355.00" x2="491.30" y2="368.60" stroke="#e2e2e2" stroke-width="0.7" />
<line x1="556.30" y1="355.00" x2="556.30" y2="368.60" stroke="#e2e2e2" stroke-width="0.7" />
<line x1="622.00" y1="355.00" x2="622.00" y2="368.60" stroke="#e2e2e2" stroke-width="0.7" />
<line x1="687.50" y1="355.00" x2="687.50" y2="368.60" stroke="#e2e2e2" stroke-width="0.7" />
<rect x="2.60" y="368.80" width="777.60" height="11.50" fill="#c9c9c9" />
<circle cx="7" cy="374.3" r="3" fill="#e8e8e8" stroke="#333" stroke-width="0.8"/><circle cx="7" cy="374.3" r="1.25" fill="#333"/>
<text x="15.00" y="377.29" font-size="7.2" fill="#111" font-weight="bold" textLength="78.50" lengthAdjust="spacingAndGlyphs" >Баланс: 419 055.50 USD</text>
<text x="98.00" y="377.29" font-size="7.2" fill="#111" font-weight="bold" textLength="69.80" lengthAdjust="spacingAndGlyphs" >Средства: 459 555.50</text>
<text x="171.90" y="377.29" font-size="7.2" fill="#111" font-weight="bold" textLength="58.60" lengthAdjust="spacingAndGlyphs" >Маржа: 48 000.00</text>
<text x="235.00" y="377.29" font-size="7.2" fill="#111" font-weight="bold" textLength="98.80" lengthAdjust="spacingAndGlyphs" >Свободная маржа: 411 555.50</text>
<text x="338.30" y="377.29" font-size="7.2" fill="#111" font-weight="bold" textLength="86.70" lengthAdjust="spacingAndGlyphs" >Уровень маржи: 957.41 %</text>
<text x="736.30" y="377.29" font-size="7.2" fill="#111" font-weight="bold" textLength="31.20" lengthAdjust="spacingAndGlyphs" >40 500.00</text>
<rect x="780.00" y="355.00" width="12.30" height="28.60" fill="#f0f0f0" />
<rect x="781.80" y="365.40" width="8.20" height="8.70" fill="#cdcdcd" />
<path d="M783.6 361 l2.3 -2.2 l2.3 2.2" fill="none" stroke="#444" stroke-width="1"/>
<path d="M783.6 378.6 l2.3 2.2 l2.3 -2.2" fill="none" stroke="#444" stroke-width="1"/>
<rect x="2.30" y="380.30" width="777.70" height="4.40" fill="#ffffff" />
<line x1="2.30" y1="384.70" x2="792.00" y2="384.70" stroke="#4a4a4a" stroke-width="0.9" />
<path d="M3.8 384.2 V396 H45.4 V384.9" fill="#fff" stroke="#3c3c3c" stroke-width="0.9"/>
<rect x="4.30" y="383.80" width="40.60" height="2.00" fill="#fff" />
<text x="10.00" y="393.09" font-size="7.2" fill="#1a1a1a" font-weight="normal" textLength="30.00" lengthAdjust="spacingAndGlyphs" >Торговля</text>
<text x="51.90" y="393.29" font-size="7.2" fill="#7e7e7e" font-weight="normal" textLength="23.70" lengthAdjust="spacingAndGlyphs" >Активы</text>
<text x="87.00" y="393.29" font-size="7.2" fill="#7e7e7e" font-weight="normal" textLength="27.50" lengthAdjust="spacingAndGlyphs" >История</text>
<text x="127.00" y="393.29" font-size="7.2" fill="#7e7e7e" font-weight="normal" textLength="26.80" lengthAdjust="spacingAndGlyphs" >Новости</text>
<text x="165.80" y="393.29" font-size="7.2" fill="#7e7e7e" font-weight="normal" textLength="19.20" lengthAdjust="spacingAndGlyphs" >Почта</text>
<text x="202.00" y="393.29" font-size="7.2" fill="#7e7e7e" font-weight="normal" textLength="33.00" lengthAdjust="spacingAndGlyphs" >Календарь</text>
<text x="247.50" y="393.29" font-size="7.2" fill="#7e7e7e" font-weight="normal" textLength="32.50" lengthAdjust="spacingAndGlyphs" >Компания</text>
<text x="292.00" y="393.29" font-size="7.2" fill="#7e7e7e" font-weight="normal" textLength="23.50" lengthAdjust="spacingAndGlyphs" >Маркет</text>
<text x="327.50" y="393.29" font-size="7.2" fill="#7e7e7e" font-weight="normal" textLength="24.50" lengthAdjust="spacingAndGlyphs" >Алерты</text>
<text x="363.80" y="393.29" font-size="7.2" fill="#7e7e7e" font-weight="normal" textLength="28.20" lengthAdjust="spacingAndGlyphs" >Сигналы</text>
<text x="404.50" y="393.29" font-size="7.2" fill="#7e7e7e" font-weight="normal" textLength="21.00" lengthAdjust="spacingAndGlyphs" >Статьи</text>
<text x="442.00" y="393.29" font-size="7.2" fill="#7e7e7e" font-weight="normal" textLength="37.50" lengthAdjust="spacingAndGlyphs" >Библиотека</text>
<text x="491.30" y="393.29" font-size="7.2" fill="#7e7e7e" font-weight="normal" textLength="31.20" lengthAdjust="spacingAndGlyphs" >Эксперты</text>
<text x="534.30" y="393.29" font-size="7.2" fill="#7e7e7e" font-weight="normal" textLength="25.70" lengthAdjust="spacingAndGlyphs" >Журнал</text>
<line x1="81.90" y1="386.60" x2="81.90" y2="395.00" stroke="#5a5a5a" stroke-width="0.7" />
<line x1="120.50" y1="386.60" x2="120.50" y2="395.00" stroke="#5a5a5a" stroke-width="0.7" />
<line x1="159.00" y1="386.60" x2="159.00" y2="395.00" stroke="#5a5a5a" stroke-width="0.7" />
<line x1="198.00" y1="386.60" x2="198.00" y2="395.00" stroke="#5a5a5a" stroke-width="0.7" />
<line x1="241.30" y1="386.60" x2="241.30" y2="395.00" stroke="#5a5a5a" stroke-width="0.7" />
<line x1="285.80" y1="386.60" x2="285.80" y2="395.00" stroke="#5a5a5a" stroke-width="0.7" />
<line x1="321.80" y1="386.60" x2="321.80" y2="395.00" stroke="#5a5a5a" stroke-width="0.7" />
<line x1="358.00" y1="386.60" x2="358.00" y2="395.00" stroke="#5a5a5a" stroke-width="0.7" />
<line x1="398.80" y1="386.60" x2="398.80" y2="395.00" stroke="#5a5a5a" stroke-width="0.7" />
<line x1="435.80" y1="386.60" x2="435.80" y2="395.00" stroke="#5a5a5a" stroke-width="0.7" />
<line x1="485.80" y1="386.60" x2="485.80" y2="395.00" stroke="#5a5a5a" stroke-width="0.7" />
<line x1="528.30" y1="386.60" x2="528.30" y2="395.00" stroke="#5a5a5a" stroke-width="0.7" />
<line x1="565.80" y1="386.60" x2="565.80" y2="395.00" stroke="#5a5a5a" stroke-width="0.7" />
<text x="186.30" y="394.67" font-size="5.2" fill="#e02020" font-weight="bold"  >7</text>
<text x="427.00" y="394.67" font-size="5.2" fill="#e02020" font-weight="bold"  >1</text>
<text x="727.00" y="393.39" font-size="7.2" fill="#222" font-weight="normal" textLength="55.00" lengthAdjust="spacingAndGlyphs" >Тестер стратегий</text>
<rect x="0.00" y="398.50" width="792.00" height="15.00" fill="#f0f0f0" />
<line x1="0.00" y1="398.60" x2="792.00" y2="398.60" stroke="#dcdcdc" stroke-width="0.6" />
<text x="-5.30" y="410.39" font-size="7.2" fill="#1a1a1a" font-weight="normal" textLength="102.60" lengthAdjust="spacingAndGlyphs" >Для вызова справки нажмите F1</text>
<text x="391.00" y="410.19" font-size="7.2" fill="#1a1a1a" font-weight="normal" textLength="21.50" lengthAdjust="spacingAndGlyphs" >Default</text>
<line x1="387.50" y1="400.50" x2="387.50" y2="412.50" stroke="#cfcfcf" stroke-width="0.7" />
<line x1="462.50" y1="400.50" x2="462.50" y2="412.50" stroke="#cfcfcf" stroke-width="0.7" />
<line x1="519.50" y1="400.50" x2="519.50" y2="412.50" stroke="#cfcfcf" stroke-width="0.7" />
<line x1="561.30" y1="400.50" x2="561.30" y2="412.50" stroke="#cfcfcf" stroke-width="0.7" />
<line x1="603.00" y1="400.50" x2="603.00" y2="412.50" stroke="#cfcfcf" stroke-width="0.7" />
<line x1="642.00" y1="400.50" x2="642.00" y2="412.50" stroke="#cfcfcf" stroke-width="0.7" />
<line x1="683.30" y1="400.50" x2="683.30" y2="412.50" stroke="#cfcfcf" stroke-width="0.7" />
<rect x="725.60" y="403.20" width="5.60" height="8.00" fill="#3b8ede" rx="0.8"/>
<rect x="726.80" y="404.60" width="3.20" height="2.20" fill="#bfe0ff" />
<circle cx="732.3" cy="410" r="2.3" fill="#3fb12f"/>
<text x="738.30" y="410.19" font-size="7.2" fill="#333" font-weight="normal" textLength="38.70" lengthAdjust="spacingAndGlyphs" >37.9 / 0.1 Mb</text>
<rect x="0.00" y="413.40" width="792.00" height="22.60" fill="#080c15" />
<rect x="222.70" y="413.40" width="28.00" height="22.60" fill="#3a3e46" />
<rect x="196.00" y="435.50" width="23.30" height="1.30" fill="#7fb8ea" />
<rect x="222.70" y="435.50" width="28.10" height="1.30" fill="#7fb8ea" />
<rect x="253.80" y="435.50" width="23.20" height="1.30" fill="#7fb8ea" />
<rect x="281.50" y="435.50" width="24.00" height="1.30" fill="#7fb8ea" />
<path d="M2 421.2 L6.4 420.5 V424.5 H2z M7.2 420.4 L12.1 419.7 V424.5 H7.2z M2 425.3 H6.4 V429.3 L2 428.6z M7.2 425.3 H12.1 V430.1 L7.2 429.4z" fill="#fff"/>
<circle cx="37" cy="423.2" r="2.9" fill="none" stroke="#fff" stroke-width="1"/>
<line x1="34.90" y1="425.40" x2="30.80" y2="429.40" stroke="#fff" stroke-width="1.1" />
<rect x="60.20" y="421.00" width="5.60" height="6.60" fill="none" stroke="#fff" stroke-width="0.9"/>
<line x1="58.60" y1="420.00" x2="58.60" y2="428.60" stroke="#fff" stroke-width="0.8" />
<line x1="67.50" y1="420.00" x2="67.50" y2="428.60" stroke="#fff" stroke-width="0.8" stroke-dasharray="3.4 1 1.4 1"/>
<line x1="58.60" y1="422.40" x2="60.00" y2="422.40" stroke="#fff" stroke-width="0.7" />
<line x1="58.60" y1="426.20" x2="60.00" y2="426.20" stroke="#fff" stroke-width="0.7" />
<line x1="66.00" y1="422.40" x2="67.50" y2="422.40" stroke="#fff" stroke-width="0.7" />
<line x1="66.00" y1="426.20" x2="67.50" y2="426.20" stroke="#fff" stroke-width="0.7" />
<text x="87.2" y="431" font-size="22.5" font-weight="bold" fill="#1e8ae6" textLength="12.4" lengthAdjust="spacingAndGlyphs">e</text>
<path d="M115.5 420.4 h4.2 l1 1 h7.2 v8.6 h-12.4z" fill="#f3cf63"/>
<rect x="115.50" y="422.20" width="12.40" height="7.80" fill="#f8dc82" />
<rect x="118.30" y="425.00" width="6.80" height="5.00" fill="#3a9be8" />
<rect x="119.80" y="427.00" width="3.80" height="3.00" fill="#f8dc82" />
<rect x="143.90" y="421.20" width="12.60" height="10.20" fill="#fff" rx="0.6"/>
<path d="M147.2 421.2 v-1 a3 2.7 0 0 1 6 0 v1" fill="none" stroke="#fff" stroke-width="0.9"/>
<rect x="146.90" y="423.20" width="2.90" height="2.90" fill="#f25022" />
<rect x="150.50" y="423.20" width="2.90" height="2.90" fill="#7fba00" />
<rect x="146.90" y="426.70" width="2.90" height="2.90" fill="#00a4ef" />
<rect x="150.50" y="426.70" width="2.90" height="2.90" fill="#ffb900" />
<path d="M172 423.4 L179.5 419.6 L187 423.4 V430.3 H172z" fill="#fff"/>
<path d="M173.4 423.6 L180.6 427.4 L184.6 423.8" fill="none" stroke="#080c15" stroke-width="1"/>
<path d="M178.2 423.2 h6.6 l-3.6 3.2z" fill="#080c15"/>
<circle cx="208" cy="424.8" r="6.6" fill="#e8453c"/>
<path d="M208 424.8 L201.6 426.6 A6.6 6.6 0 0 0 209.4 431.25 z" fill="#2ba24c"/><path d="M208 424.8 L202.3 421.4 A6.6 6.6 0 0 0 201.6 426.6z" fill="#2ba24c"/>
<path d="M208 424.8 L209.4 431.25 A6.6 6.6 0 0 0 213.8 421.6 z" fill="#fbc116"/>
<circle cx="208" cy="424.8" r="3" fill="#fff"/><circle cx="208" cy="424.8" r="2.3" fill="#4b8df8"/>
<ellipse cx="233.6" cy="426.8" rx="3.6" ry="3.2" fill="#e2c42c"/><ellipse cx="239.6" cy="427.2" rx="3.6" ry="3" fill="#2f8fe0"/><ellipse cx="236.4" cy="421.6" rx="3.6" ry="3" fill="#3aa83a"/><circle cx="236.6" cy="425.4" r="2.4" fill="#f0d860"/>
<text x="235.60" y="426.94" font-size="4" fill="#6a5200" font-weight="bold"  >$</text>
<rect x="258.30" y="418.20" width="14.00" height="13.50" fill="#1b2a36" />
<text x="260.00" y="427.02" font-size="5.6" fill="#e8e8e8" font-weight="bold" textLength="10.60" lengthAdjust="spacingAndGlyphs" >J2T</text>
<circle cx="293.5" cy="424.2" r="6.2" fill="#1ba3e8"/>
<text x="290.40" y="427.64" font-size="9" fill="#fff" font-weight="bold"  >S</text>
<circle cx="301.3" cy="429" r="3.3" fill="#1a1a1a" stroke="#d0d0d0" stroke-width="0.7"/>
<text x="300.10" y="430.76" font-size="4.6" fill="#fff" font-weight="bold"  >1</text>
<circle cx="634.6" cy="421.4" r="1.5" fill="none" stroke="#fff" stroke-width="0.8"/><circle cx="630.4" cy="424" r="1.2" fill="none" stroke="#fff" stroke-width="0.7"/><path d="M628 429.4 v-1.8 a2.4 2.4 0 0 1 4.8 0 v1.8 M632.2 425.4 a2.6 2.6 0 0 1 5 1" fill="none" stroke="#fff" stroke-width="0.8"/>
<path d="M649.2 426.6 l3.8 -3.6 l3.8 3.6" fill="none" stroke="#fff" stroke-width="1"/>
<rect x="664.40" y="422.00" width="7.80" height="4.80" fill="#e8e8e8" rx="0.5"/>
<rect x="662.80" y="421.20" width="2.60" height="2.00" fill="#e8e8e8" />
<rect x="665.60" y="423.20" width="5.40" height="2.40" fill="#8a9098" />
<path d="M678 428.8 a7 7 0 0 1 7 -7 M680 428.8 a5 5 0 0 1 5 -5 M682.2 428.8 a2.8 2.8 0 0 1 2.8 -2.8" fill="none" stroke="#c8c8c8" stroke-width="0.9"/>
<path d="M690.2 423.2 h1.8 l2.2 -2 v6.6 l-2.2 -2 h-1.8z" fill="none" stroke="#fff" stroke-width="0.7"/><path d="M695.8 422.4 a2.8 2.8 0 0 1 0 4.2 M697.4 421.2 a4.4 4.4 0 0 1 0 6.6 M699 420.4 a5.6 5.6 0 0 1 0 8.2" fill="none" stroke="#fff" stroke-width="0.6"/>
<text x="705.60" y="427.05" font-size="6.8" fill="#fff" font-weight="normal" textLength="13.40" lengthAdjust="spacingAndGlyphs" >ENG</text>
<text x="734.80" y="422.05" font-size="6.8" fill="#fff" font-weight="normal" textLength="15.20" lengthAdjust="spacingAndGlyphs" >20:45</text>
<text x="727.60" y="432.45" font-size="6.8" fill="#fff" font-weight="normal" textLength="30.20" lengthAdjust="spacingAndGlyphs" >19.02.2019</text>
<path d="M769 421 h8.6 v6 h-5.6 l-1.6 1.6 v-1.6 h-1.4z" fill="#fff"/>
<line x1="770.40" y1="422.80" x2="776.20" y2="422.80" stroke="#080c15" stroke-width="0.5" />
<line x1="770.40" y1="424.60" x2="776.20" y2="424.60" stroke="#080c15" stroke-width="0.5" />
<circle cx="778" cy="429.4" r="3.8" fill="#111" stroke="#d0d0d0" stroke-width="0.7"/>
<text x="775.30" y="431.30" font-size="5" fill="#fff" font-weight="bold" textLength="5.40" lengthAdjust="spacingAndGlyphs" >13</text>
</svg>
</body></html>
